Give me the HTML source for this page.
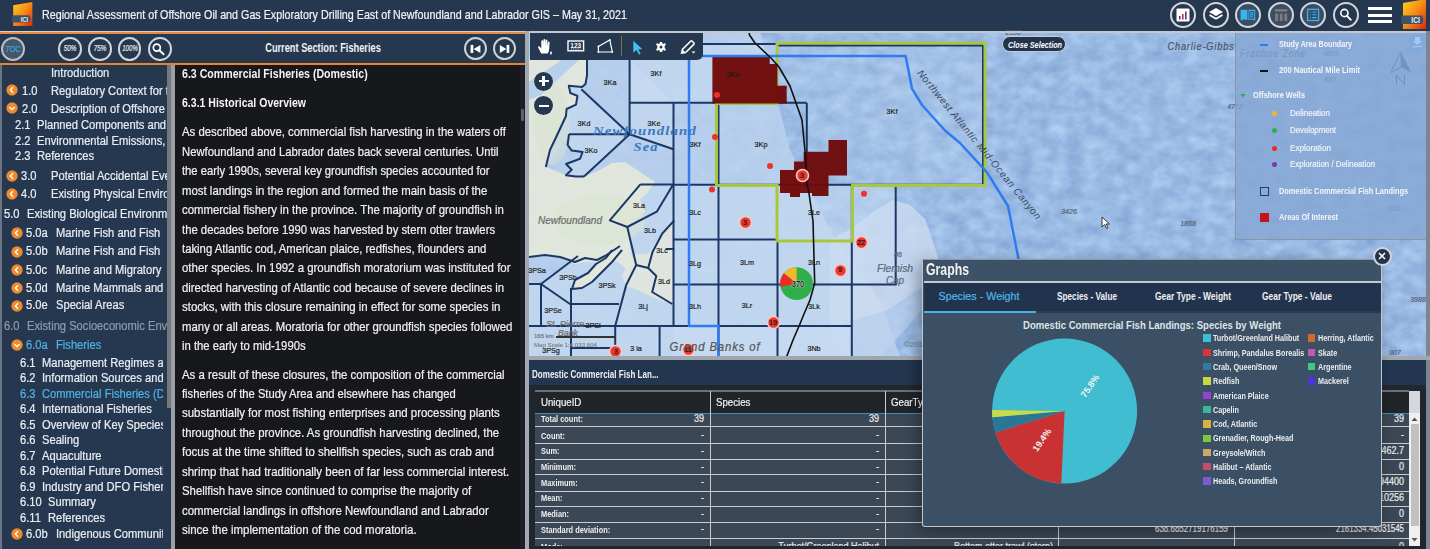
<!DOCTYPE html>
<html><head><meta charset="utf-8"><style>
html,body{margin:0;padding:0;}
body{width:1430px;height:549px;overflow:hidden;position:relative;background:#25384f;font-family:"Liberation Sans", sans-serif;}
div{box-sizing:border-box;}
.a{position:absolute;}
.t{position:absolute;}
</style></head><body>
<div class="a" style="left:0;top:0;width:1430px;height:31px;background:#25384f"></div>
<svg class="a" style="left:11px;top:1px" width="24" height="28" viewBox="0 0 24 28">
<defs><linearGradient id="lg1" x1="0" y1="0" x2="1" y2="1"><stop offset="0" stop-color="#ffd21e"/><stop offset="0.5" stop-color="#f78a14"/><stop offset="1" stop-color="#d42a10"/></linearGradient></defs>
<path d="M2.2 4.2 L21.4 1 L21.4 25 L2.2 25 Z" fill="url(#lg1)"/>
<path d="M1 14.2 L18.2 14.2 L19.8 17.8 L18.2 21.4 L1 21.4 Z" fill="#3b5268"/>
<text x="9.7" y="20.7" font-family="Liberation Sans" font-weight="bold" font-size="6.8" fill="#f0f0f0" textLength="7.3" lengthAdjust="spacingAndGlyphs">ICI</text>
</svg>
<div class="t" id="t0" style="position:absolute;top:8.00px;font-size:13px;line-height:13px;color:#f2f4f6;white-space:nowrap;-webkit-text-stroke:0.22px currentColor;left:42.00px;transform-origin:0 0;transform:translateX(0.00px) scaleX(0.8255);">Regional Assessment of Offshore Oil and Gas Exploratory Drilling East of Newfoundland and Labrador GIS – May 31, 2021</div>
<div class="a" style="left:0;top:31px;width:525px;height:1px;background:#d2d2d2"></div>
<div class="a" style="left:0;top:32px;width:525px;height:2px;background:#e38a48"></div>
<div class="a" style="left:0;top:34px;width:525px;height:29px;background:#25384f"></div>
<div class="a" style="left:0;top:63px;width:525px;height:2px;background:#e8832a"></div>
<div class="a" style="left:1.0px;top:37.0px;width:24px;height:24px;border-radius:50%;background:#46566b;border:2px solid #b9bec4"></div>
<div class="t" id="t1" style="position:absolute;top:44.88px;font-size:9px;line-height:9px;color:#3aa6e0;white-space:nowrap;-webkit-text-stroke:0.22px currentColor;font-style:italic;left:13.00px;transform-origin:0 0;transform:translateX(-7.54px) scaleX(0.8000);">TOC</div>
<div class="a" style="left:58.2px;top:37.2px;width:23.5px;height:23.5px;border-radius:50%;background:transparent;border:2px solid #d2d4d6"></div>
<div class="t" id="t2" style="position:absolute;top:44.30px;font-size:8.5px;line-height:8.5px;color:#e2e6ea;white-space:nowrap;-webkit-text-stroke:0.22px currentColor;font-style:italic;left:70.30px;transform-origin:0 0;transform:translateX(-6.35px) scaleX(0.7464);">50%</div>
<div class="a" style="left:88.2px;top:37.2px;width:23.5px;height:23.5px;border-radius:50%;background:transparent;border:2px solid #d2d4d6"></div>
<div class="t" id="t3" style="position:absolute;top:44.30px;font-size:8.5px;line-height:8.5px;color:#e2e6ea;white-space:nowrap;-webkit-text-stroke:0.22px currentColor;font-style:italic;left:100.30px;transform-origin:0 0;transform:translateX(-6.35px) scaleX(0.7464);">75%</div>
<div class="a" style="left:117.9px;top:37.2px;width:23.5px;height:23.5px;border-radius:50%;background:transparent;border:2px solid #d2d4d6"></div>
<div class="t" id="t4" style="position:absolute;top:44.30px;font-size:8.5px;line-height:8.5px;color:#e2e6ea;white-space:nowrap;-webkit-text-stroke:0.22px currentColor;font-style:italic;left:130.00px;transform-origin:0 0;transform:translateX(-7.85px) scaleX(0.7218);">100%</div>
<div class="a" style="left:148.1px;top:37.2px;width:23.5px;height:23.5px;border-radius:50%;background:transparent;border:2px solid #d2d4d6"></div>
<svg class="a" style="left:150px;top:40px" width="18" height="18" viewBox="0 0 18 18"><circle cx="6.8" cy="7.6" r="3.5" fill="none" stroke="#fff" stroke-width="1.7"/><path d="M9.4 10.2 L13.6 14.2" stroke="#fff" stroke-width="2" stroke-linecap="round"/></svg>
<div class="t" id="t5" style="position:absolute;top:41.94px;font-size:12px;line-height:12px;color:#f0f2f4;white-space:nowrap;font-weight:bold;left:322.60px;transform-origin:0 0;transform:translateX(-57.80px) scaleX(0.7704);">Current Section: Fisheries</div>
<div class="a" style="left:463.9px;top:37.0px;width:23.2px;height:23.2px;border-radius:50%;background:transparent;border:2px solid #cdd0d3"></div>
<div class="a" style="left:492.9px;top:37.0px;width:23.2px;height:23.2px;border-radius:50%;background:transparent;border:2px solid #cdd0d3"></div>
<svg class="a" style="left:465px;top:38px" width="20" height="20" viewBox="465 38 20 20"><rect x="470.6" y="44.9" width="2.7" height="8" fill="#fff"/><path d="M480.4 44.9 L480.4 52.9 L473.6 48.9 Z" fill="#fff"/></svg>
<svg class="a" style="left:495px;top:38px" width="20" height="20" viewBox="495 38 20 20"><path d="M499.8 44.9 L499.8 52.9 L506.3 48.9 Z" fill="#fff"/><rect x="506.6" y="44.9" width="2.7" height="8" fill="#fff"/></svg>
<div class="a" style="left:0;top:65px;width:167px;height:484px;background:#25384f;overflow:hidden">
<div class="a" style="left:0;top:0;width:1.5px;height:484px;background:#6a7482"></div>
</div>
<div class="a" style="left:167px;top:65px;width:4px;height:343px;background:#74787d"></div>
<div class="a" style="left:171px;top:65px;width:4px;height:484px;background:#9aa0a6"></div>
<div class="a" style="left:0;top:65px;width:167px;height:484px;overflow:hidden">
<div class="t" id="t6" style="position:absolute;top:2.34px;font-size:12px;line-height:12px;color:#e9edf2;white-space:nowrap;-webkit-text-stroke:0.22px currentColor;left:51.00px;transform-origin:0 0;transform:translateX(0.00px) scaleX(0.9300);">Introduction</div>
<div class="t" id="t7" style="position:absolute;top:19.64px;font-size:12px;line-height:12px;color:#e9edf2;white-space:nowrap;-webkit-text-stroke:0.22px currentColor;left:21.50px;transform-origin:0 0;transform:translateX(0.00px) scaleX(0.9300);">1.0</div>
<div class="t" id="t8" style="position:absolute;top:19.64px;font-size:12px;line-height:12px;color:#e9edf2;white-space:nowrap;-webkit-text-stroke:0.22px currentColor;left:51.00px;transform-origin:0 0;transform:translateX(0.00px) scaleX(0.9300);">Regulatory Context for the Regional Assessment</div>
<div class="t" id="t9" style="position:absolute;top:38.04px;font-size:12px;line-height:12px;color:#e9edf2;white-space:nowrap;-webkit-text-stroke:0.22px currentColor;left:21.50px;transform-origin:0 0;transform:translateX(0.00px) scaleX(0.9300);">2.0</div>
<div class="t" id="t10" style="position:absolute;top:38.04px;font-size:12px;line-height:12px;color:#e9edf2;white-space:nowrap;-webkit-text-stroke:0.22px currentColor;left:51.00px;transform-origin:0 0;transform:translateX(0.00px) scaleX(0.9300);">Description of Offshore Exploratory Drilling</div>
<div class="t" id="t11" style="position:absolute;top:54.24px;font-size:12px;line-height:12px;color:#e9edf2;white-space:nowrap;-webkit-text-stroke:0.22px currentColor;left:14.60px;transform-origin:0 0;transform:translateX(0.00px) scaleX(0.9300);">2.1</div>
<div class="t" id="t12" style="position:absolute;top:54.24px;font-size:12px;line-height:12px;color:#e9edf2;white-space:nowrap;-webkit-text-stroke:0.22px currentColor;left:37.30px;transform-origin:0 0;transform:translateX(0.00px) scaleX(0.9300);">Planned Components and Activities</div>
<div class="t" id="t13" style="position:absolute;top:69.74px;font-size:12px;line-height:12px;color:#e9edf2;white-space:nowrap;-webkit-text-stroke:0.22px currentColor;left:14.60px;transform-origin:0 0;transform:translateX(0.00px) scaleX(0.9300);">2.2</div>
<div class="t" id="t14" style="position:absolute;top:69.74px;font-size:12px;line-height:12px;color:#e9edf2;white-space:nowrap;-webkit-text-stroke:0.22px currentColor;left:37.30px;transform-origin:0 0;transform:translateX(0.00px) scaleX(0.9300);">Environmental Emissions, Discharges</div>
<div class="t" id="t15" style="position:absolute;top:85.24px;font-size:12px;line-height:12px;color:#e9edf2;white-space:nowrap;-webkit-text-stroke:0.22px currentColor;left:14.60px;transform-origin:0 0;transform:translateX(0.00px) scaleX(0.9300);">2.3</div>
<div class="t" id="t16" style="position:absolute;top:85.24px;font-size:12px;line-height:12px;color:#e9edf2;white-space:nowrap;-webkit-text-stroke:0.22px currentColor;left:37.30px;transform-origin:0 0;transform:translateX(0.00px) scaleX(0.9300);">References</div>
<div class="t" id="t17" style="position:absolute;top:104.84px;font-size:12px;line-height:12px;color:#e9edf2;white-space:nowrap;-webkit-text-stroke:0.22px currentColor;left:21.00px;transform-origin:0 0;transform:translateX(0.00px) scaleX(0.9300);">3.0</div>
<div class="t" id="t18" style="position:absolute;top:104.84px;font-size:12px;line-height:12px;color:#e9edf2;white-space:nowrap;-webkit-text-stroke:0.22px currentColor;left:51.00px;transform-origin:0 0;transform:translateX(0.00px) scaleX(0.9300);">Potential Accidental Events</div>
<div class="t" id="t19" style="position:absolute;top:123.44px;font-size:12px;line-height:12px;color:#e9edf2;white-space:nowrap;-webkit-text-stroke:0.22px currentColor;left:21.00px;transform-origin:0 0;transform:translateX(0.00px) scaleX(0.9300);">4.0</div>
<div class="t" id="t20" style="position:absolute;top:123.44px;font-size:12px;line-height:12px;color:#e9edf2;white-space:nowrap;-webkit-text-stroke:0.22px currentColor;left:51.00px;transform-origin:0 0;transform:translateX(0.00px) scaleX(0.9300);">Existing Physical Environment</div>
<div class="t" id="t21" style="position:absolute;top:143.14px;font-size:12px;line-height:12px;color:#e9edf2;white-space:nowrap;-webkit-text-stroke:0.22px currentColor;left:4.00px;transform-origin:0 0;transform:translateX(0.00px) scaleX(0.9300);">5.0</div>
<div class="t" id="t22" style="position:absolute;top:143.14px;font-size:12px;line-height:12px;color:#e9edf2;white-space:nowrap;-webkit-text-stroke:0.22px currentColor;left:27.00px;transform-origin:0 0;transform:translateX(0.00px) scaleX(0.9300);">Existing Biological Environment</div>
<div class="t" id="t23" style="position:absolute;top:254.54px;font-size:12px;line-height:12px;color:#8e9bad;white-space:nowrap;-webkit-text-stroke:0.22px currentColor;left:4.00px;transform-origin:0 0;transform:translateX(0.00px) scaleX(0.9300);">6.0</div>
<div class="t" id="t24" style="position:absolute;top:254.54px;font-size:12px;line-height:12px;color:#8e9bad;white-space:nowrap;-webkit-text-stroke:0.22px currentColor;left:27.00px;transform-origin:0 0;transform:translateX(0.00px) scaleX(0.9300);">Existing Socioeconomic Environment</div>
</div>
<div class="a" style="left:0;top:65px;width:162.5px;height:484px;overflow:hidden">
<div class="t" id="t25" style="position:absolute;top:162.24px;font-size:12px;line-height:12px;color:#e9edf2;white-space:nowrap;-webkit-text-stroke:0.22px currentColor;left:26.40px;transform-origin:0 0;transform:translateX(0.00px) scaleX(0.9300);">5.0a</div>
<div class="t" id="t26" style="position:absolute;top:162.24px;font-size:12px;line-height:12px;color:#e9edf2;white-space:nowrap;-webkit-text-stroke:0.22px currentColor;left:56.00px;transform-origin:0 0;transform:translateX(0.00px) scaleX(0.9300);">Marine Fish and Fish Habitat</div>
<div class="t" id="t27" style="position:absolute;top:180.44px;font-size:12px;line-height:12px;color:#e9edf2;white-space:nowrap;-webkit-text-stroke:0.22px currentColor;left:26.40px;transform-origin:0 0;transform:translateX(0.00px) scaleX(0.9300);">5.0b</div>
<div class="t" id="t28" style="position:absolute;top:180.44px;font-size:12px;line-height:12px;color:#e9edf2;white-space:nowrap;-webkit-text-stroke:0.22px currentColor;left:56.00px;transform-origin:0 0;transform:translateX(0.00px) scaleX(0.9300);">Marine Fish and Fish Habitat</div>
<div class="t" id="t29" style="position:absolute;top:198.84px;font-size:12px;line-height:12px;color:#e9edf2;white-space:nowrap;-webkit-text-stroke:0.22px currentColor;left:26.40px;transform-origin:0 0;transform:translateX(0.00px) scaleX(0.9300);">5.0c</div>
<div class="t" id="t30" style="position:absolute;top:198.84px;font-size:12px;line-height:12px;color:#e9edf2;white-space:nowrap;-webkit-text-stroke:0.22px currentColor;left:56.00px;transform-origin:0 0;transform:translateX(0.00px) scaleX(0.9300);">Marine and Migratory Birds</div>
<div class="t" id="t31" style="position:absolute;top:217.14px;font-size:12px;line-height:12px;color:#e9edf2;white-space:nowrap;-webkit-text-stroke:0.22px currentColor;left:26.40px;transform-origin:0 0;transform:translateX(0.00px) scaleX(0.9300);">5.0d</div>
<div class="t" id="t32" style="position:absolute;top:217.14px;font-size:12px;line-height:12px;color:#e9edf2;white-space:nowrap;-webkit-text-stroke:0.22px currentColor;left:56.00px;transform-origin:0 0;transform:translateX(0.00px) scaleX(0.9300);">Marine Mammals and Sea Turtles</div>
<div class="t" id="t33" style="position:absolute;top:234.44px;font-size:12px;line-height:12px;color:#e9edf2;white-space:nowrap;-webkit-text-stroke:0.22px currentColor;left:26.40px;transform-origin:0 0;transform:translateX(0.00px) scaleX(0.9300);">5.0e</div>
<div class="t" id="t34" style="position:absolute;top:234.44px;font-size:12px;line-height:12px;color:#e9edf2;white-space:nowrap;-webkit-text-stroke:0.22px currentColor;left:56.00px;transform-origin:0 0;transform:translateX(0.00px) scaleX(0.9300);">Special Areas</div>
<div class="t" id="t35" style="position:absolute;top:273.64px;font-size:12px;line-height:12px;color:#4cb2e4;white-space:nowrap;-webkit-text-stroke:0.22px currentColor;left:26.40px;transform-origin:0 0;transform:translateX(0.00px) scaleX(0.9300);">6.0a</div>
<div class="t" id="t36" style="position:absolute;top:273.64px;font-size:12px;line-height:12px;color:#4cb2e4;white-space:nowrap;-webkit-text-stroke:0.22px currentColor;left:56.00px;transform-origin:0 0;transform:translateX(0.00px) scaleX(0.9300);">Fisheries</div>
<div class="t" id="t37" style="position:absolute;top:291.64px;font-size:12px;line-height:12px;color:#e9edf2;white-space:nowrap;-webkit-text-stroke:0.22px currentColor;left:19.70px;transform-origin:0 0;transform:translateX(0.00px) scaleX(0.9300);">6.1</div>
<div class="t" id="t38" style="position:absolute;top:291.64px;font-size:12px;line-height:12px;color:#e9edf2;white-space:nowrap;-webkit-text-stroke:0.22px currentColor;left:42.30px;transform-origin:0 0;transform:translateX(0.00px) scaleX(0.9300);">Management Regimes and Fisheries</div>
<div class="t" id="t39" style="position:absolute;top:307.14px;font-size:12px;line-height:12px;color:#e9edf2;white-space:nowrap;-webkit-text-stroke:0.22px currentColor;left:19.70px;transform-origin:0 0;transform:translateX(0.00px) scaleX(0.9300);">6.2</div>
<div class="t" id="t40" style="position:absolute;top:307.14px;font-size:12px;line-height:12px;color:#e9edf2;white-space:nowrap;-webkit-text-stroke:0.22px currentColor;left:42.30px;transform-origin:0 0;transform:translateX(0.00px) scaleX(0.9300);">Information Sources and Data</div>
<div class="t" id="t41" style="position:absolute;top:322.64px;font-size:12px;line-height:12px;color:#4cb2e4;white-space:nowrap;-webkit-text-stroke:0.22px currentColor;left:19.70px;transform-origin:0 0;transform:translateX(0.00px) scaleX(0.9300);">6.3</div>
<div class="t" id="t42" style="position:absolute;top:322.64px;font-size:12px;line-height:12px;color:#4cb2e4;white-space:nowrap;-webkit-text-stroke:0.22px currentColor;left:42.30px;transform-origin:0 0;transform:translateX(0.00px) scaleX(0.9300);">Commercial Fisheries (Domestic)</div>
<div class="t" id="t43" style="position:absolute;top:338.14px;font-size:12px;line-height:12px;color:#e9edf2;white-space:nowrap;-webkit-text-stroke:0.22px currentColor;left:19.70px;transform-origin:0 0;transform:translateX(0.00px) scaleX(0.9300);">6.4</div>
<div class="t" id="t44" style="position:absolute;top:338.14px;font-size:12px;line-height:12px;color:#e9edf2;white-space:nowrap;-webkit-text-stroke:0.22px currentColor;left:42.30px;transform-origin:0 0;transform:translateX(0.00px) scaleX(0.9300);">International Fisheries</div>
<div class="t" id="t45" style="position:absolute;top:353.64px;font-size:12px;line-height:12px;color:#e9edf2;white-space:nowrap;-webkit-text-stroke:0.22px currentColor;left:19.70px;transform-origin:0 0;transform:translateX(0.00px) scaleX(0.9300);">6.5</div>
<div class="t" id="t46" style="position:absolute;top:353.64px;font-size:12px;line-height:12px;color:#e9edf2;white-space:nowrap;-webkit-text-stroke:0.22px currentColor;left:42.30px;transform-origin:0 0;transform:translateX(0.00px) scaleX(0.9300);">Overview of Key Species</div>
<div class="t" id="t47" style="position:absolute;top:369.14px;font-size:12px;line-height:12px;color:#e9edf2;white-space:nowrap;-webkit-text-stroke:0.22px currentColor;left:19.70px;transform-origin:0 0;transform:translateX(0.00px) scaleX(0.9300);">6.6</div>
<div class="t" id="t48" style="position:absolute;top:369.14px;font-size:12px;line-height:12px;color:#e9edf2;white-space:nowrap;-webkit-text-stroke:0.22px currentColor;left:42.30px;transform-origin:0 0;transform:translateX(0.00px) scaleX(0.9300);">Sealing</div>
<div class="t" id="t49" style="position:absolute;top:384.64px;font-size:12px;line-height:12px;color:#e9edf2;white-space:nowrap;-webkit-text-stroke:0.22px currentColor;left:19.70px;transform-origin:0 0;transform:translateX(0.00px) scaleX(0.9300);">6.7</div>
<div class="t" id="t50" style="position:absolute;top:384.64px;font-size:12px;line-height:12px;color:#e9edf2;white-space:nowrap;-webkit-text-stroke:0.22px currentColor;left:42.30px;transform-origin:0 0;transform:translateX(0.00px) scaleX(0.9300);">Aquaculture</div>
<div class="t" id="t51" style="position:absolute;top:400.14px;font-size:12px;line-height:12px;color:#e9edf2;white-space:nowrap;-webkit-text-stroke:0.22px currentColor;left:19.70px;transform-origin:0 0;transform:translateX(0.00px) scaleX(0.9300);">6.8</div>
<div class="t" id="t52" style="position:absolute;top:400.14px;font-size:12px;line-height:12px;color:#e9edf2;white-space:nowrap;-webkit-text-stroke:0.22px currentColor;left:42.30px;transform-origin:0 0;transform:translateX(0.00px) scaleX(0.9300);">Potential Future Domestic Fisheries</div>
<div class="t" id="t53" style="position:absolute;top:415.64px;font-size:12px;line-height:12px;color:#e9edf2;white-space:nowrap;-webkit-text-stroke:0.22px currentColor;left:19.70px;transform-origin:0 0;transform:translateX(0.00px) scaleX(0.9300);">6.9</div>
<div class="t" id="t54" style="position:absolute;top:415.64px;font-size:12px;line-height:12px;color:#e9edf2;white-space:nowrap;-webkit-text-stroke:0.22px currentColor;left:42.30px;transform-origin:0 0;transform:translateX(0.00px) scaleX(0.9300);">Industry and DFO Fisheries Surveys</div>
<div class="t" id="t55" style="position:absolute;top:431.14px;font-size:12px;line-height:12px;color:#e9edf2;white-space:nowrap;-webkit-text-stroke:0.22px currentColor;left:19.70px;transform-origin:0 0;transform:translateX(0.00px) scaleX(0.9300);">6.10</div>
<div class="t" id="t56" style="position:absolute;top:431.14px;font-size:12px;line-height:12px;color:#e9edf2;white-space:nowrap;-webkit-text-stroke:0.22px currentColor;left:48.30px;transform-origin:0 0;transform:translateX(0.00px) scaleX(0.9300);">Summary</div>
<div class="t" id="t57" style="position:absolute;top:446.64px;font-size:12px;line-height:12px;color:#e9edf2;white-space:nowrap;-webkit-text-stroke:0.22px currentColor;left:19.70px;transform-origin:0 0;transform:translateX(0.00px) scaleX(0.9300);">6.11</div>
<div class="t" id="t58" style="position:absolute;top:446.64px;font-size:12px;line-height:12px;color:#e9edf2;white-space:nowrap;-webkit-text-stroke:0.22px currentColor;left:48.30px;transform-origin:0 0;transform:translateX(0.00px) scaleX(0.9300);">References</div>
<div class="t" id="t59" style="position:absolute;top:463.14px;font-size:12px;line-height:12px;color:#e9edf2;white-space:nowrap;-webkit-text-stroke:0.22px currentColor;left:26.40px;transform-origin:0 0;transform:translateX(0.00px) scaleX(0.9300);">6.0b</div>
<div class="t" id="t60" style="position:absolute;top:463.14px;font-size:12px;line-height:12px;color:#e9edf2;white-space:nowrap;-webkit-text-stroke:0.22px currentColor;left:56.00px;transform-origin:0 0;transform:translateX(0.00px) scaleX(0.9300);">Indigenous Communities and Land Use</div>
</div>
<svg class="a" style="left:6.0px;top:84.0px" width="12" height="12" viewBox="0 0 12 12"><circle cx="6" cy="6" r="5.7" fill="#ee8a2e"/><path d="M7 3.3 L4.4 6 L7 8.7" fill="none" stroke="#fff" stroke-width="1.4"/></svg>
<svg class="a" style="left:6.0px;top:102.0px" width="12" height="12" viewBox="0 0 12 12"><circle cx="6" cy="6" r="5.7" fill="#ee8a2e"/><path d="M3.3 5 L6 7.6 L8.7 5" fill="none" stroke="#fff" stroke-width="1.4"/></svg>
<svg class="a" style="left:6.0px;top:170.0px" width="12" height="12" viewBox="0 0 12 12"><circle cx="6" cy="6" r="5.7" fill="#ee8a2e"/><path d="M7 3.3 L4.4 6 L7 8.7" fill="none" stroke="#fff" stroke-width="1.4"/></svg>
<svg class="a" style="left:6.0px;top:188.0px" width="12" height="12" viewBox="0 0 12 12"><circle cx="6" cy="6" r="5.7" fill="#ee8a2e"/><path d="M7 3.3 L4.4 6 L7 8.7" fill="none" stroke="#fff" stroke-width="1.4"/></svg>
<svg class="a" style="left:11.0px;top:227.0px" width="12" height="12" viewBox="0 0 12 12"><circle cx="6" cy="6" r="5.7" fill="#ee8a2e"/><path d="M7 3.3 L4.4 6 L7 8.7" fill="none" stroke="#fff" stroke-width="1.4"/></svg>
<svg class="a" style="left:11.0px;top:245.5px" width="12" height="12" viewBox="0 0 12 12"><circle cx="6" cy="6" r="5.7" fill="#ee8a2e"/><path d="M7 3.3 L4.4 6 L7 8.7" fill="none" stroke="#fff" stroke-width="1.4"/></svg>
<svg class="a" style="left:11.0px;top:264.0px" width="12" height="12" viewBox="0 0 12 12"><circle cx="6" cy="6" r="5.7" fill="#ee8a2e"/><path d="M7 3.3 L4.4 6 L7 8.7" fill="none" stroke="#fff" stroke-width="1.4"/></svg>
<svg class="a" style="left:11.0px;top:282.3px" width="12" height="12" viewBox="0 0 12 12"><circle cx="6" cy="6" r="5.7" fill="#ee8a2e"/><path d="M7 3.3 L4.4 6 L7 8.7" fill="none" stroke="#fff" stroke-width="1.4"/></svg>
<svg class="a" style="left:11.0px;top:299.5px" width="12" height="12" viewBox="0 0 12 12"><circle cx="6" cy="6" r="5.7" fill="#ee8a2e"/><path d="M7 3.3 L4.4 6 L7 8.7" fill="none" stroke="#fff" stroke-width="1.4"/></svg>
<svg class="a" style="left:11.0px;top:528.0px" width="12" height="12" viewBox="0 0 12 12"><circle cx="6" cy="6" r="5.7" fill="#ee8a2e"/><path d="M7 3.3 L4.4 6 L7 8.7" fill="none" stroke="#fff" stroke-width="1.4"/></svg>
<svg class="a" style="left:11.0px;top:339.0px" width="12" height="12" viewBox="0 0 12 12"><circle cx="6" cy="6" r="5.7" fill="#ee8a2e"/><path d="M3.3 5 L6 7.6 L8.7 5" fill="none" stroke="#fff" stroke-width="1.4"/></svg>
<div class="a" style="left:175px;top:65px;width:348px;height:484px;background:#17181c"></div>
<div class="a" style="left:520px;top:65px;width:5px;height:484px;background:#1e1e24"></div>
<div class="a" style="left:520.5px;top:109px;width:3.5px;height:12px;background:#5c6068;border-radius:1px"></div>
<div class="t" id="t61" style="position:absolute;top:67.00px;font-size:13px;line-height:13px;color:#f4f4f4;white-space:nowrap;font-weight:bold;left:181.50px;transform-origin:0 0;transform:translateX(0.00px) scaleX(0.8159);">6.3 Commercial Fisheries (Domestic)</div>
<div class="t" id="t62" style="position:absolute;top:95.80px;font-size:13px;line-height:13px;color:#f4f4f4;white-space:nowrap;font-weight:bold;left:181.50px;transform-origin:0 0;transform:translateX(0.00px) scaleX(0.8094);">6.3.1 Historical Overview</div>
<div class="t" id="t63" style="position:absolute;top:125.20px;font-size:13px;line-height:13px;color:#f0f0f0;white-space:nowrap;-webkit-text-stroke:0.22px currentColor;left:181.70px;transform-origin:0 0;transform:translateX(0.00px) scaleX(0.8741);">As described above, commercial fish harvesting in the waters off</div>
<div class="t" id="t64" style="position:absolute;top:144.66px;font-size:13px;line-height:13px;color:#f0f0f0;white-space:nowrap;-webkit-text-stroke:0.22px currentColor;left:181.70px;transform-origin:0 0;transform:translateX(0.00px) scaleX(0.8658);">Newfoundland and Labrador dates back several centuries. Until</div>
<div class="t" id="t65" style="position:absolute;top:164.12px;font-size:13px;line-height:13px;color:#f0f0f0;white-space:nowrap;-webkit-text-stroke:0.22px currentColor;left:181.70px;transform-origin:0 0;transform:translateX(0.00px) scaleX(0.8634);">the early 1990s, several key groundfish species accounted for</div>
<div class="t" id="t66" style="position:absolute;top:183.58px;font-size:13px;line-height:13px;color:#f0f0f0;white-space:nowrap;-webkit-text-stroke:0.22px currentColor;left:181.70px;transform-origin:0 0;transform:translateX(0.00px) scaleX(0.8765);">most landings in the region and formed the main basis of the</div>
<div class="t" id="t67" style="position:absolute;top:203.04px;font-size:13px;line-height:13px;color:#f0f0f0;white-space:nowrap;-webkit-text-stroke:0.22px currentColor;left:181.70px;transform-origin:0 0;transform:translateX(0.00px) scaleX(0.8758);">commercial fishery in the province. The majority of groundfish in</div>
<div class="t" id="t68" style="position:absolute;top:222.50px;font-size:13px;line-height:13px;color:#f0f0f0;white-space:nowrap;-webkit-text-stroke:0.22px currentColor;left:181.70px;transform-origin:0 0;transform:translateX(0.00px) scaleX(0.8700);">the decades before 1990 was harvested by stern otter trawlers</div>
<div class="t" id="t69" style="position:absolute;top:241.96px;font-size:13px;line-height:13px;color:#f0f0f0;white-space:nowrap;-webkit-text-stroke:0.22px currentColor;left:181.70px;transform-origin:0 0;transform:translateX(0.00px) scaleX(0.8700);">taking Atlantic cod, American plaice, redfishes, flounders and</div>
<div class="t" id="t70" style="position:absolute;top:261.42px;font-size:13px;line-height:13px;color:#f0f0f0;white-space:nowrap;-webkit-text-stroke:0.22px currentColor;left:181.70px;transform-origin:0 0;transform:translateX(0.00px) scaleX(0.8793);">other species. In 1992 a groundfish moratorium was instituted for</div>
<div class="t" id="t71" style="position:absolute;top:280.88px;font-size:13px;line-height:13px;color:#f0f0f0;white-space:nowrap;-webkit-text-stroke:0.22px currentColor;left:181.70px;transform-origin:0 0;transform:translateX(0.00px) scaleX(0.8722);">directed harvesting of Atlantic cod because of severe declines in</div>
<div class="t" id="t72" style="position:absolute;top:300.34px;font-size:13px;line-height:13px;color:#f0f0f0;white-space:nowrap;-webkit-text-stroke:0.22px currentColor;left:181.70px;transform-origin:0 0;transform:translateX(0.00px) scaleX(0.8804);">stocks, with this closure remaining in effect for some species in</div>
<div class="t" id="t73" style="position:absolute;top:319.80px;font-size:13px;line-height:13px;color:#f0f0f0;white-space:nowrap;-webkit-text-stroke:0.22px currentColor;left:181.70px;transform-origin:0 0;transform:translateX(0.00px) scaleX(0.8760);">many or all areas. Moratoria for other groundfish species followed</div>
<div class="t" id="t74" style="position:absolute;top:339.26px;font-size:13px;line-height:13px;color:#f0f0f0;white-space:nowrap;-webkit-text-stroke:0.22px currentColor;left:181.70px;transform-origin:0 0;transform:translateX(0.00px) scaleX(0.8682);">in the early to mid-1990s</div>
<div class="t" id="t75" style="position:absolute;top:367.50px;font-size:13px;line-height:13px;color:#f0f0f0;white-space:nowrap;-webkit-text-stroke:0.22px currentColor;left:181.70px;transform-origin:0 0;transform:translateX(0.00px) scaleX(0.8772);">As a result of these closures, the composition of the commercial</div>
<div class="t" id="t76" style="position:absolute;top:386.96px;font-size:13px;line-height:13px;color:#f0f0f0;white-space:nowrap;-webkit-text-stroke:0.22px currentColor;left:181.70px;transform-origin:0 0;transform:translateX(0.00px) scaleX(0.8610);">fisheries of the Study Area and elsewhere has changed</div>
<div class="t" id="t77" style="position:absolute;top:406.42px;font-size:13px;line-height:13px;color:#f0f0f0;white-space:nowrap;-webkit-text-stroke:0.22px currentColor;left:181.70px;transform-origin:0 0;transform:translateX(0.00px) scaleX(0.8796);">substantially for most fishing enterprises and processing plants</div>
<div class="t" id="t78" style="position:absolute;top:425.88px;font-size:13px;line-height:13px;color:#f0f0f0;white-space:nowrap;-webkit-text-stroke:0.22px currentColor;left:181.70px;transform-origin:0 0;transform:translateX(0.00px) scaleX(0.8723);">throughout the province. As groundfish harvesting declined, the</div>
<div class="t" id="t79" style="position:absolute;top:445.34px;font-size:13px;line-height:13px;color:#f0f0f0;white-space:nowrap;-webkit-text-stroke:0.22px currentColor;left:181.70px;transform-origin:0 0;transform:translateX(0.00px) scaleX(0.8755);">focus at the time shifted to shellfish species, such as crab and</div>
<div class="t" id="t80" style="position:absolute;top:464.80px;font-size:13px;line-height:13px;color:#f0f0f0;white-space:nowrap;-webkit-text-stroke:0.22px currentColor;left:181.70px;transform-origin:0 0;transform:translateX(0.00px) scaleX(0.8813);">shrimp that had traditionally been of far less commercial interest.</div>
<div class="t" id="t81" style="position:absolute;top:484.26px;font-size:13px;line-height:13px;color:#f0f0f0;white-space:nowrap;-webkit-text-stroke:0.22px currentColor;left:181.70px;transform-origin:0 0;transform:translateX(0.00px) scaleX(0.8741);">Shellfish have since continued to comprise the majority of</div>
<div class="t" id="t82" style="position:absolute;top:503.72px;font-size:13px;line-height:13px;color:#f0f0f0;white-space:nowrap;-webkit-text-stroke:0.22px currentColor;left:181.70px;transform-origin:0 0;transform:translateX(0.00px) scaleX(0.8756);">commercial landings in offshore Newfoundland and Labrador</div>
<div class="t" id="t83" style="position:absolute;top:523.18px;font-size:13px;line-height:13px;color:#f0f0f0;white-space:nowrap;-webkit-text-stroke:0.22px currentColor;left:181.70px;transform-origin:0 0;transform:translateX(0.00px) scaleX(0.8798);">since the implementation of the cod moratoria.</div>
<div class="a" style="left:525px;top:31px;width:4px;height:518px;background:#a3a9b0"></div>
<svg class="a" style="left:529px;top:31px" width="901" height="325" viewBox="529 31 901 325">
<defs>
<filter id="bath" x="0" y="0" width="100%" height="100%" color-interpolation-filters="sRGB"><feTurbulence type="fractalNoise" baseFrequency="0.06 0.08" numOctaves="3" seed="11" result="n"/><feColorMatrix in="n" type="matrix" values="0.2 0 0 0 0.505  0.2 0 0 0 0.63  0.14 0 0 0 0.825  0 0 0 0 1"/></filter>
<linearGradient id="shelf" x1="0" y1="0" x2="1" y2="0"><stop offset="0" stop-color="#c6d9ef"/><stop offset="1" stop-color="#a9c5e9"/></linearGradient>
</defs>
<rect x="529" y="31" width="901" height="325" fill="#a3c0e7"/>
<rect x="529" y="31" width="901" height="325" filter="url(#bath)" opacity="1"/>
<path d="M529 31 L760 31 L790 150 L830 230 L880 300 L900 356 L529 356 Z" fill="#bdd3ee" opacity="0.8"/>
<polygon points="852,228 876,210 892.6,199.7 910,205 925.4,219.3 938.5,258.7 922,288 886,311 850,321 830,330 830,240" fill="#d0def0" opacity="0.75"/>
<polygon points="830,330 850,321 886,311 922,288 930,300 905,330 880,356 830,356" fill="#c0d4ee" opacity="0.6"/>
<polygon points="587.6,59 703,59 703,44 777,44 777,102.8 629.6,102.8 629.6,59" fill="#c8dcf2" opacity="0.55"/>
<polygon points="545.8,167 550,150 555.7,138 565.9,116.3 566.6,109 576,104.6 577.5,95.9 570.3,93 568.8,85.7 582,87 585.5,84 587,75.5 587,59 581.3,89.2 629.6,134.2 569,134.2" fill="#c8dcf2" opacity="0.55"/>
<polygon points="629.6,59 629.6,134.2 673.5,149.3 673.5,102.8" fill="#c8dcf2" opacity="0.55"/>
<polygon points="569,134.2 629.6,134.2 584,176.6 575.8,176.6 566,175.2 571.7,169.8 566,164 580,158.8 582.6,152 571.7,150.6 567.6,145" fill="#c8dcf2" opacity="0.55"/>
<polygon points="673.5,102.8 806.8,102.8 806.8,184.8 985,184.8 985,43 777,43 777,102.8" fill="#c8dcf2" opacity="0.2"/>
<polygon points="673.5,102.8 673.5,326 852,326 852,356 529,356 529,284 541,284 578,256 611.6,221 636.4,190 673.5,184" fill="#c8dcf2" opacity="0.55"/>
<polygon points="673.5,184.8 895.7,184.8 895.7,284.4 852,284.4 852,356 673.5,356" fill="#c8dcf2" opacity="0.55"/>
<polygon points="529,59 587,59 587,75.5 585.5,84 582,87 568.8,85.7 570.3,93 577.5,95.9 576,104.6 566.6,109 565.9,116.3 555.7,138 550,150 545.8,167 566,175 584,176.6 600,170 612,163 625,162 640,172 655,182 648,192 640,200 645,212 632,222 627,227 630,245 633,262 628,270 618,262 608,258 600,262 585,262 575,264 560,258 545,256 529,258" fill="#e4e8db" opacity="0.92"/>
<polygon points="572,289 575,280 588,273 596,264 606,258 612,250 622,250 612,262 602,272 592,282 582,288" fill="#e4e8db" opacity="0.92"/>
<polygon points="628,262 636,254 648,254 662,233 674,221 674,304 660,300 650,296 640,291 626,286 622,276" fill="#e4e8db" opacity="0.85"/>
<ellipse cx="552" cy="125" rx="18" ry="40" fill="#d8e2d0" opacity="0.5"/>
<polygon points="529,82 563,59 580,59 541,95 529,100" fill="#b9d0ec"/>
<ellipse cx="600" cy="220" rx="45" ry="25" fill="#dbe4d2" opacity="0.6"/>
<polyline points="587,59 587,75.5 585.5,84 582,87 568.8,85.7 570.3,93 577.5,95.9 576,104.6 566.6,109 565.9,116.3 555.7,138 550,150 545.8,167" fill="none" stroke="#1a3766" stroke-width="2" stroke-linejoin="round"/>
<polyline points="569,134.2 567.6,145 571.7,150.6 582.6,152 580,158.8 566,164 571.7,169.8 566,175.2 575.8,176.6 584,176.6" fill="none" stroke="#1a3766" stroke-width="2" stroke-linejoin="round"/>
<polyline points="629.6,59 629.6,134.2" fill="none" stroke="#1a3766" stroke-width="2" stroke-linejoin="round"/>
<polyline points="629.6,102.8 806.8,102.8" fill="none" stroke="#1a3766" stroke-width="2" stroke-linejoin="round"/>
<polyline points="581.3,89.2 629.6,134.2" fill="none" stroke="#1a3766" stroke-width="2" stroke-linejoin="round"/>
<polyline points="569,134.2 629.6,134.2" fill="none" stroke="#1a3766" stroke-width="2" stroke-linejoin="round"/>
<polyline points="629.6,134.2 673.5,149.3" fill="none" stroke="#1a3766" stroke-width="2" stroke-linejoin="round"/>
<polyline points="673.5,102.8 673.5,326" fill="none" stroke="#1a3766" stroke-width="2" stroke-linejoin="round"/>
<polyline points="629.6,134.2 584,176.6" fill="none" stroke="#1a3766" stroke-width="2" stroke-linejoin="round"/>
<polyline points="703,44 777,44" fill="none" stroke="#1a3766" stroke-width="2" stroke-linejoin="round"/>
<polyline points="778,45.5 983,45.5 983,184" fill="none" stroke="#1a3766" stroke-width="2" stroke-linejoin="round"/>
<polyline points="718.5,103 718.5,356" fill="none" stroke="#1a3766" stroke-width="2" stroke-linejoin="round"/>
<polyline points="777.5,241 777.5,356" fill="none" stroke="#1a3766" stroke-width="2" stroke-linejoin="round"/>
<polyline points="806.8,103 806.8,185" fill="none" stroke="#1a3766" stroke-width="2" stroke-linejoin="round"/>
<polyline points="673.5,184.8 985,184.8" fill="none" stroke="#1a3766" stroke-width="2" stroke-linejoin="round"/>
<polyline points="895.7,185 895.7,284.4" fill="none" stroke="#1a3766" stroke-width="2" stroke-linejoin="round"/>
<polyline points="851.8,185 851.8,356" fill="none" stroke="#1a3766" stroke-width="2" stroke-linejoin="round"/>
<polyline points="673.5,239.5 777,239.5" fill="none" stroke="#1a3766" stroke-width="2" stroke-linejoin="round"/>
<polyline points="673.5,284.4 896.7,284.4" fill="none" stroke="#1a3766" stroke-width="2" stroke-linejoin="round"/>
<polyline points="529,326 852,326" fill="none" stroke="#1a3766" stroke-width="2" stroke-linejoin="round"/>
<polyline points="659.6,326 659.6,356" fill="none" stroke="#1a3766" stroke-width="2" stroke-linejoin="round"/>
<polyline points="570,348 616,348" fill="none" stroke="#1a3766" stroke-width="2" stroke-linejoin="round"/>
<polyline points="571,288 571,356" fill="none" stroke="#1a3766" stroke-width="2" stroke-linejoin="round"/>
<polyline points="615.2,326.2 615.2,356" fill="none" stroke="#1a3766" stroke-width="2" stroke-linejoin="round"/>
<polyline points="541,284 570,304 619,304" fill="none" stroke="#1a3766" stroke-width="2" stroke-linejoin="round"/>
<polyline points="541,284 541,326" fill="none" stroke="#1a3766" stroke-width="2" stroke-linejoin="round"/>
<polyline points="529,284 541,284" fill="none" stroke="#1a3766" stroke-width="2" stroke-linejoin="round"/>
<polyline points="541,284 578,256" fill="none" stroke="#1a3766" stroke-width="2" stroke-linejoin="round"/>
<polyline points="640.4,184.4 673.2,184.4 656.8,211.7 627.3,227 609.8,220.4 640.4,184.4" fill="none" stroke="#1a3766" stroke-width="2" stroke-linejoin="round"/>
<polyline points="627.3,227 636.2,265" fill="none" stroke="#1a3766" stroke-width="2" stroke-linejoin="round"/>
<polyline points="674.3,220.4 662.3,233.5 652.5,252 648.2,268" fill="none" stroke="#1a3766" stroke-width="2" stroke-linejoin="round"/>
<polyline points="665.6,249 674.3,249" fill="none" stroke="#1a3766" stroke-width="2" stroke-linejoin="round"/>
<polyline points="636.2,265 626.2,285 615.2,326" fill="none" stroke="#1a3766" stroke-width="2" stroke-linejoin="round"/>
<polyline points="636.2,265 648.2,268 656.3,276 652.2,292 672.3,304" fill="none" stroke="#1a3766" stroke-width="2" stroke-linejoin="round"/>
<polyline points="529,257 545,255 560,257 575,262 585,258 597,260 605,256 614,250 620,246" fill="none" stroke="#1a3766" stroke-width="2" stroke-linejoin="round"/>
<polyline points="572,289 575,280 588,273 596,264 606,258 612,250" fill="none" stroke="#1a3766" stroke-width="2" stroke-linejoin="round"/>
<polyline points="622,250 612,262 602,272 592,282 582,288 572,289" fill="none" stroke="#1a3766" stroke-width="2" stroke-linejoin="round"/>
<polyline points="777,43 985,43 985,185.5 852.5,185.5 852.5,241 777,241 777,185.5 716.5,185.5 716.5,103.5 777,103.5 777,43" fill="none" stroke="#a9c73c" stroke-width="3"/>
<polygon points="712.4,56.3 769.7,56.3 769.7,64 777.4,64 777.4,85.7 786.7,85.7 786.7,103.4 712.4,103.4" fill="#6e0a0a" opacity="0.97"/>
<polygon points="803.7,151.7 828.5,151.7 828.5,140 847,140 847,175.5 828.5,175.5 828.5,196 812,196 812,193 800,193 800,197 790,197 790,193 780,193 780,170 794,170 794,161.6 803.7,161.6" fill="#6e0a0a" opacity="0.97"/>
<polyline points="718.4,356 718.4,326 689,326 689,56 905.6,56 912,88.6 922,105 945,130.5 960,143 987,172.4 1008,206 1018.7,260 1025,300" fill="none" stroke="#2f7cf0" stroke-width="2.5" stroke-linejoin="round"/>
<polyline points="749,31 749.5,35 755,43 771,58 779,67 790,86 802,120 805,151 807,185 808.5,190 813,221 814.7,283 810,300 804,314 799.5,325 793,340 786.5,357" fill="none" stroke="#111" stroke-width="1.6" stroke-linejoin="round"/>
<circle cx="717" cy="95" r="3" fill="#f0302a"/>
<circle cx="715" cy="137" r="3" fill="#f0302a"/>
<circle cx="770" cy="166" r="3" fill="#f0302a"/>
<circle cx="712" cy="189.4" r="3" fill="#f0302a"/>
<circle cx="864" cy="193.7" r="3" fill="#f0302a"/>
</svg>
<svg class="a" style="left:794.5px;top:168.0px" width="15" height="15"><circle cx="7.5" cy="7.5" r="6" fill="#e83a32" stroke="#f6c9c5" stroke-width="1.6"/></svg>
<div class="t" id="t84" style="position:absolute;top:171.73px;font-size:8px;line-height:8px;color:#2a1010;white-space:nowrap;-webkit-text-stroke:0.22px currentColor;left:802.00px;transform-origin:0 0;transform:translateX(-2.00px) scaleX(0.9000);">3</div>
<svg class="a" style="left:737.5px;top:215.0px" width="15" height="15"><circle cx="7.5" cy="7.5" r="6" fill="#e83a32" stroke="#f6c9c5" stroke-width="1.6"/></svg>
<div class="t" id="t85" style="position:absolute;top:218.73px;font-size:8px;line-height:8px;color:#2a1010;white-space:nowrap;-webkit-text-stroke:0.22px currentColor;left:745.00px;transform-origin:0 0;transform:translateX(-2.00px) scaleX(0.9000);">3</div>
<svg class="a" style="left:853.5px;top:235.1px" width="15" height="15"><circle cx="7.5" cy="7.5" r="6" fill="#e83a32" stroke="#f6c9c5" stroke-width="1.6"/></svg>
<div class="t" id="t86" style="position:absolute;top:238.83px;font-size:8px;line-height:8px;color:#2a1010;white-space:nowrap;-webkit-text-stroke:0.22px currentColor;left:861.00px;transform-origin:0 0;transform:translateX(-4.01px) scaleX(0.9000);">22</div>
<svg class="a" style="left:832.5px;top:262.5px" width="15" height="15"><circle cx="7.5" cy="7.5" r="6" fill="#e83a32" stroke="#f6c9c5" stroke-width="1.6"/></svg>
<div class="t" id="t87" style="position:absolute;top:266.23px;font-size:8px;line-height:8px;color:#2a1010;white-space:nowrap;-webkit-text-stroke:0.22px currentColor;left:840.00px;transform-origin:0 0;transform:translateX(-2.00px) scaleX(0.9000);">9</div>
<svg class="a" style="left:765.5px;top:315.0px" width="15" height="15"><circle cx="7.5" cy="7.5" r="6" fill="#e83a32" stroke="#f6c9c5" stroke-width="1.6"/></svg>
<div class="t" id="t88" style="position:absolute;top:318.73px;font-size:8px;line-height:8px;color:#2a1010;white-space:nowrap;-webkit-text-stroke:0.22px currentColor;left:773.00px;transform-origin:0 0;transform:translateX(-4.01px) scaleX(0.9000);">19</div>
<svg class="a" style="left:608.1px;top:344.1px" width="15" height="15"><circle cx="7.5" cy="7.5" r="6" fill="#e83a32" stroke="#f6c9c5" stroke-width="1.6"/></svg>
<div class="t" id="t89" style="position:absolute;top:347.83px;font-size:8px;line-height:8px;color:#2a1010;white-space:nowrap;-webkit-text-stroke:0.22px currentColor;left:615.60px;transform-origin:0 0;transform:translateX(-2.00px) scaleX(0.9000);">3</div>
<svg class="a" style="left:680.9px;top:341.9px" width="15" height="15"><circle cx="7.5" cy="7.5" r="6" fill="#e83a32" stroke="#f6c9c5" stroke-width="1.6"/></svg>
<div class="t" id="t90" style="position:absolute;top:345.63px;font-size:8px;line-height:8px;color:#2a1010;white-space:nowrap;-webkit-text-stroke:0.22px currentColor;left:688.40px;transform-origin:0 0;transform:translateX(-3.74px) scaleX(0.9000);">11</div>
<svg class="a" style="left:778px;top:265px" width="38" height="38" viewBox="778 265 38 38">
<circle cx="796.6" cy="283.6" r="16.4" fill="#2fae4a"/>
<path d="M796.6,283.6 L783.85,273.28 A16.4,16.4 0 0 1 796.60,267.20 Z" fill="#f2b72a"/>
<path d="M796.6,283.6 L780.50,286.73 A16.4,16.4 0 0 1 783.85,273.28 Z" fill="#ee2a22"/>
</svg>
<div class="t" id="t91" style="position:absolute;top:278.76px;font-size:9.5px;line-height:9.5px;color:#151515;white-space:nowrap;font-weight:bold;left:797.50px;transform-origin:0 0;transform:translateX(-6.30px) scaleX(0.7945);text-shadow:0 0 1.5px #fff,0 0 1px #fff;">370</div>
<div class="t" id="t92" style="position:absolute;top:78.53px;font-size:8px;line-height:8px;color:#1e1e1e;white-space:nowrap;-webkit-text-stroke:0.22px currentColor;left:610.00px;transform-origin:0 0;transform:translateX(-6.41px) scaleX(0.9000);">3Ka</div>
<div class="t" id="t93" style="position:absolute;top:119.53px;font-size:8px;line-height:8px;color:#1e1e1e;white-space:nowrap;-webkit-text-stroke:0.22px currentColor;left:584.00px;transform-origin:0 0;transform:translateX(-6.41px) scaleX(0.9000);">3Kd</div>
<div class="t" id="t94" style="position:absolute;top:146.83px;font-size:8px;line-height:8px;color:#1e1e1e;white-space:nowrap;-webkit-text-stroke:0.22px currentColor;left:591.00px;transform-origin:0 0;transform:translateX(-6.41px) scaleX(0.9000);">3Ko</div>
<div class="t" id="t95" style="position:absolute;top:70.23px;font-size:8px;line-height:8px;color:#1e1e1e;white-space:nowrap;-webkit-text-stroke:0.22px currentColor;left:656.40px;transform-origin:0 0;transform:translateX(-5.41px) scaleX(0.9000);">3Kf</div>
<div class="t" id="t96" style="position:absolute;top:119.53px;font-size:8px;line-height:8px;color:#1e1e1e;white-space:nowrap;-webkit-text-stroke:0.22px currentColor;left:653.70px;transform-origin:0 0;transform:translateX(-6.41px) scaleX(0.9000);">3Ke</div>
<div class="t" id="t97" style="position:absolute;top:140.73px;font-size:8px;line-height:8px;color:#1e1e1e;white-space:nowrap;-webkit-text-stroke:0.22px currentColor;left:695.00px;transform-origin:0 0;transform:translateX(-5.41px) scaleX(0.9000);">3Kf</div>
<div class="t" id="t98" style="position:absolute;top:71.23px;font-size:8px;line-height:8px;color:#1e1e1e;white-space:nowrap;-webkit-text-stroke:0.22px currentColor;left:732.50px;transform-origin:0 0;transform:translateX(-6.41px) scaleX(0.9000);">3Ke</div>
<div class="t" id="t99" style="position:absolute;top:141.23px;font-size:8px;line-height:8px;color:#1e1e1e;white-space:nowrap;-webkit-text-stroke:0.22px currentColor;left:761.00px;transform-origin:0 0;transform:translateX(-6.41px) scaleX(0.9000);">3Kp</div>
<div class="t" id="t100" style="position:absolute;top:108.23px;font-size:8px;line-height:8px;color:#1e1e1e;white-space:nowrap;-webkit-text-stroke:0.22px currentColor;left:892.00px;transform-origin:0 0;transform:translateX(-5.41px) scaleX(0.9000);">3Kf</div>
<div class="t" id="t101" style="position:absolute;top:202.43px;font-size:8px;line-height:8px;color:#1e1e1e;white-space:nowrap;-webkit-text-stroke:0.22px currentColor;left:639.40px;transform-origin:0 0;transform:translateX(-6.01px) scaleX(0.9000);">3La</div>
<div class="t" id="t102" style="position:absolute;top:227.23px;font-size:8px;line-height:8px;color:#1e1e1e;white-space:nowrap;-webkit-text-stroke:0.22px currentColor;left:650.00px;transform-origin:0 0;transform:translateX(-6.01px) scaleX(0.9000);">3Lb</div>
<div class="t" id="t103" style="position:absolute;top:247.43px;font-size:8px;line-height:8px;color:#1e1e1e;white-space:nowrap;-webkit-text-stroke:0.22px currentColor;left:662.00px;transform-origin:0 0;transform:translateX(-5.81px) scaleX(0.9000);">3Lc</div>
<div class="t" id="t104" style="position:absolute;top:278.23px;font-size:8px;line-height:8px;color:#1e1e1e;white-space:nowrap;-webkit-text-stroke:0.22px currentColor;left:664.30px;transform-origin:0 0;transform:translateX(-6.01px) scaleX(0.9000);">3Ld</div>
<div class="t" id="t105" style="position:absolute;top:209.23px;font-size:8px;line-height:8px;color:#1e1e1e;white-space:nowrap;-webkit-text-stroke:0.22px currentColor;left:695.00px;transform-origin:0 0;transform:translateX(-5.81px) scaleX(0.9000);">3Lc</div>
<div class="t" id="t106" style="position:absolute;top:259.63px;font-size:8px;line-height:8px;color:#1e1e1e;white-space:nowrap;-webkit-text-stroke:0.22px currentColor;left:695.00px;transform-origin:0 0;transform:translateX(-6.01px) scaleX(0.9000);">3Lg</div>
<div class="t" id="t107" style="position:absolute;top:303.23px;font-size:8px;line-height:8px;color:#1e1e1e;white-space:nowrap;-webkit-text-stroke:0.22px currentColor;left:695.00px;transform-origin:0 0;transform:translateX(-6.01px) scaleX(0.9000);">3Lh</div>
<div class="t" id="t108" style="position:absolute;top:303.23px;font-size:8px;line-height:8px;color:#1e1e1e;white-space:nowrap;-webkit-text-stroke:0.22px currentColor;left:643.00px;transform-origin:0 0;transform:translateX(-4.81px) scaleX(0.9000);">3Lj</div>
<div class="t" id="t109" style="position:absolute;top:209.23px;font-size:8px;line-height:8px;color:#1e1e1e;white-space:nowrap;-webkit-text-stroke:0.22px currentColor;left:814.00px;transform-origin:0 0;transform:translateX(-6.01px) scaleX(0.9000);">3Le</div>
<div class="t" id="t110" style="position:absolute;top:258.93px;font-size:8px;line-height:8px;color:#1e1e1e;white-space:nowrap;-webkit-text-stroke:0.22px currentColor;left:746.60px;transform-origin:0 0;transform:translateX(-7.00px) scaleX(0.9000);">3Lm</div>
<div class="t" id="t111" style="position:absolute;top:259.23px;font-size:8px;line-height:8px;color:#1e1e1e;white-space:nowrap;-webkit-text-stroke:0.22px currentColor;left:814.00px;transform-origin:0 0;transform:translateX(-6.01px) scaleX(0.9000);">3Ln</div>
<div class="t" id="t112" style="position:absolute;top:302.23px;font-size:8px;line-height:8px;color:#1e1e1e;white-space:nowrap;-webkit-text-stroke:0.22px currentColor;left:746.60px;transform-origin:0 0;transform:translateX(-5.20px) scaleX(0.9000);">3Lr</div>
<div class="t" id="t113" style="position:absolute;top:303.23px;font-size:8px;line-height:8px;color:#1e1e1e;white-space:nowrap;-webkit-text-stroke:0.22px currentColor;left:814.00px;transform-origin:0 0;transform:translateX(-5.81px) scaleX(0.9000);">3Lk</div>
<div class="t" id="t114" style="position:absolute;top:344.73px;font-size:8px;line-height:8px;color:#1e1e1e;white-space:nowrap;-webkit-text-stroke:0.22px currentColor;left:814.00px;transform-origin:0 0;transform:translateX(-6.61px) scaleX(0.9000);">3Nb</div>
<div class="t" id="t115" style="position:absolute;top:266.73px;font-size:8px;line-height:8px;color:#1e1e1e;white-space:nowrap;-webkit-text-stroke:0.22px currentColor;left:537.00px;transform-origin:0 0;transform:translateX(-8.81px) scaleX(0.9000);">3PSa</div>
<div class="t" id="t116" style="position:absolute;top:274.23px;font-size:8px;line-height:8px;color:#1e1e1e;white-space:nowrap;-webkit-text-stroke:0.22px currentColor;left:568.00px;transform-origin:0 0;transform:translateX(-8.81px) scaleX(0.9000);">3PSb</div>
<div class="t" id="t117" style="position:absolute;top:282.23px;font-size:8px;line-height:8px;color:#1e1e1e;white-space:nowrap;-webkit-text-stroke:0.22px currentColor;left:607.00px;transform-origin:0 0;transform:translateX(-8.61px) scaleX(0.9000);">3PSk</div>
<div class="t" id="t118" style="position:absolute;top:306.93px;font-size:8px;line-height:8px;color:#1e1e1e;white-space:nowrap;-webkit-text-stroke:0.22px currentColor;left:552.80px;transform-origin:0 0;transform:translateX(-8.81px) scaleX(0.9000);">3PSe</div>
<div class="t" id="t119" style="position:absolute;top:322.23px;font-size:8px;line-height:8px;color:#1e1e1e;white-space:nowrap;-webkit-text-stroke:0.22px currentColor;left:593.00px;transform-origin:0 0;transform:translateX(-7.61px) scaleX(0.9000);">3PSl</div>
<div class="t" id="t120" style="position:absolute;top:347.23px;font-size:8px;line-height:8px;color:#1e1e1e;white-space:nowrap;-webkit-text-stroke:0.22px currentColor;left:551.00px;transform-origin:0 0;transform:translateX(-8.81px) scaleX(0.9000);">3PSg</div>
<div class="t" id="t121" style="position:absolute;top:344.73px;font-size:8px;line-height:8px;color:#1e1e1e;white-space:nowrap;-webkit-text-stroke:0.22px currentColor;left:636.40px;transform-origin:0 0;transform:translateX(-5.81px) scaleX(0.9000);">3 la</div>
<div class="t" id="t122" style="position:absolute;top:216.03px;font-size:10px;line-height:10px;color:#6f6f6f;white-space:nowrap;-webkit-text-stroke:0.22px currentColor;font-style:italic;left:569.80px;transform-origin:0 0;transform:translateX(-32.00px) scaleX(1.0010);">Newfoundland</div>
<div class="t" id="t123" style="position:absolute;top:123.50px;font-size:13px;line-height:13px;color:#3a78c0;white-space:nowrap;font-weight:bold;font-style:italic;left:645.00px;transform-origin:0 0;transform:translateX(-52.00px) scaleX(1.1370);font-family:'Liberation Serif';letter-spacing:1px;">Newfoundland</div>
<div class="t" id="t124" style="position:absolute;top:139.50px;font-size:13px;line-height:13px;color:#3a78c0;white-space:nowrap;font-weight:bold;font-style:italic;left:645.60px;transform-origin:0 0;transform:translateX(-12.50px) scaleX(1.1111);font-family:'Liberation Serif';letter-spacing:1px;">Sea</div>
<div class="t" id="t125" style="position:absolute;top:320.38px;font-size:9px;line-height:9px;color:#6b6b6b;white-space:nowrap;-webkit-text-stroke:0.22px currentColor;font-style:italic;left:565.00px;transform-origin:0 0;transform:translateX(-19.00px) scaleX(1.0129);">St. Pierre</div>
<div class="t" id="t126" style="position:absolute;top:329.38px;font-size:9px;line-height:9px;color:#6b6b6b;white-space:nowrap;-webkit-text-stroke:0.22px currentColor;font-style:italic;left:568.00px;transform-origin:0 0;transform:translateX(-10.00px) scaleX(0.9749);">Bank</div>
<div class="t" id="t127" style="position:absolute;top:332.92px;font-size:6px;line-height:6px;color:#777;white-space:nowrap;-webkit-text-stroke:0.22px currentColor;left:534.00px;transform-origin:0 0;transform:translateX(0.00px) scaleX(1.0000);">165 km</div>
<div class="a" style="left:556px;top:336px;width:60px;height:2px;background:#333"></div>
<div class="t" id="t128" style="position:absolute;top:341.92px;font-size:6px;line-height:6px;color:#888;white-space:nowrap;-webkit-text-stroke:0.22px currentColor;left:534.00px;transform-origin:0 0;transform:translateX(0.00px) scaleX(1.0208);">Map Scale 1:4,033,604</div>
<div class="t" id="t129" style="position:absolute;top:339.50px;font-size:13px;line-height:13px;color:#555;white-space:nowrap;-webkit-text-stroke:0.22px currentColor;font-style:italic;left:714.50px;transform-origin:0 0;transform:translateX(-45.50px) scaleX(0.8722);letter-spacing:1px;">Grand Banks of</div>
<div class="t" id="t130" style="position:absolute;top:264.04px;font-size:10px;line-height:10px;color:#5a6a80;white-space:nowrap;-webkit-text-stroke:0.22px currentColor;font-style:italic;left:895.00px;transform-origin:0 0;transform:translateX(-18.00px) scaleX(1.0281);">Flemish</div>
<div class="t" id="t131" style="position:absolute;top:275.54px;font-size:10px;line-height:10px;color:#5a6a80;white-space:nowrap;-webkit-text-stroke:0.22px currentColor;font-style:italic;left:895.00px;transform-origin:0 0;transform:translateX(-9.00px) scaleX(0.9804);">Cap</div>
<div class="t" id="t132" style="position:absolute;top:41.19px;font-size:11px;line-height:11px;color:#4a5468;white-space:nowrap;-webkit-text-stroke:0.22px currentColor;font-style:italic;left:1200.50px;transform-origin:0 0;transform:translateX(-33.50px) scaleX(0.8349);letter-spacing:1px;">Charlie-Gibbs</div>
<div class="t" id="t133" style="position:absolute;top:208.07px;font-size:7px;line-height:7px;color:#5a6478;white-space:nowrap;-webkit-text-stroke:0.22px currentColor;font-style:italic;left:1069.00px;transform-origin:0 0;transform:translateX(-7.79px) scaleX(1.0000);">3426</div>
<div class="t" id="t134" style="position:absolute;top:220.07px;font-size:7px;line-height:7px;color:#5a6478;white-space:nowrap;-webkit-text-stroke:0.22px currentColor;font-style:italic;left:1188.00px;transform-origin:0 0;transform:translateX(-7.79px) scaleX(1.0000);">1868</div>
<div class="t" id="t135" style="position:absolute;top:251.07px;font-size:7px;line-height:7px;color:#5a6478;white-space:nowrap;-webkit-text-stroke:0.22px currentColor;font-style:italic;left:898.00px;transform-origin:0 0;transform:translateX(-3.90px) scaleX(1.0000);">86</div>
<div class="t" id="t136" style="position:absolute;top:341.23px;font-size:8px;line-height:8px;color:#7a8aa0;white-space:nowrap;-webkit-text-stroke:0.22px currentColor;left:913.50px;transform-origin:0 0;transform:translateX(-9.62px) scaleX(1.0000);">©201</div>
<div class="t" id="t137" style="position:absolute;top:296.07px;font-size:7px;line-height:7px;color:#5a6478;white-space:nowrap;-webkit-text-stroke:0.22px currentColor;font-style:italic;left:1418.00px;transform-origin:0 0;transform:translateX(-7.79px) scaleX(1.0000);">3988</div>
<div class="t" id="t138" style="position:absolute;top:349.07px;font-size:7px;line-height:7px;color:#5a6478;white-space:nowrap;-webkit-text-stroke:0.22px currentColor;font-style:italic;left:1395.00px;transform-origin:0 0;transform:translateX(-5.84px) scaleX(1.0000);">907</div>
<div class="t" id="t139" style="position:absolute;top:29.07px;font-size:7px;line-height:7px;color:#5a6478;white-space:nowrap;-webkit-text-stroke:0.22px currentColor;font-style:italic;left:1013.00px;transform-origin:0 0;transform:translateX(-7.79px) scaleX(1.0000);">2330</div>
<div class="t" id="t140" style="position:absolute;top:48.19px;font-size:11px;line-height:11px;color:#4a5468;white-space:nowrap;-webkit-text-stroke:0.22px currentColor;font-style:italic;left:1273.00px;transform-origin:0 0;transform:translateX(-33.00px) scaleX(0.8040);letter-spacing:1px;">Fracture Zone</div>
<div class="t" id="t141" style="position:absolute;top:49.57px;font-size:7px;line-height:7px;color:#5a6478;white-space:nowrap;-webkit-text-stroke:0.22px currentColor;font-style:italic;left:1331.00px;transform-origin:0 0;transform:translateX(-7.79px) scaleX(1.0000);">4859</div>
<div class="t" id="t142" style="position:absolute;top:75.57px;font-size:7px;line-height:7px;color:#5a6478;white-space:nowrap;-webkit-text-stroke:0.22px currentColor;font-style:italic;left:1330.00px;transform-origin:0 0;transform:translateX(-5.84px) scaleX(1.0000);">817</div>
<div class="t" id="t143" style="position:absolute;top:102.57px;font-size:7px;line-height:7px;color:#5a6478;white-space:nowrap;-webkit-text-stroke:0.22px currentColor;font-style:italic;left:1235.00px;transform-origin:0 0;transform:translateX(-7.79px) scaleX(1.0000);">4752</div>
<div class="t" id="t144" style="position:absolute;top:204.57px;font-size:7px;line-height:7px;color:#5a6478;white-space:nowrap;-webkit-text-stroke:0.22px currentColor;font-style:italic;left:1394.00px;transform-origin:0 0;transform:translateX(-5.84px) scaleX(1.0000);">732</div>
<div class="a" style="left:979px;top:145px;width:0;height:0;"><div style="position:absolute;left:0;top:0;transform:rotate(50.8deg);transform-origin:0 0;"><div style="position:absolute;left:-95px;top:-7px;width:190px;text-align:center;font-size:10px;font-style:italic;color:#3e4a5e;letter-spacing:0.6px;white-space:nowrap;line-height:14px">Northwest Atlantic Mid-Ocean Canyon</div></div></div>
<div class="a" style="left:1002px;top:36px;width:63.5px;height:15.5px;border-radius:8px;background:#22344c;border:1.5px solid #c8ccd0"></div>
<div class="t" id="t145" style="position:absolute;top:39.76px;font-size:9.5px;line-height:9.5px;color:#fff;white-space:nowrap;font-weight:bold;font-style:italic;left:1034.50px;transform-origin:0 0;transform:translateX(-27.00px) scaleX(0.7633);">Close Selection</div>
<svg class="a" style="left:1101px;top:216px" width="12" height="14" viewBox="0 0 12 14"><path d="M1 1 L1 11 L3.5 8.5 L5.5 12.5 L7 11.8 L5 8 L8.5 8 Z" fill="#fff" stroke="#222" stroke-width="0.9"/></svg>
<div class="a" style="left:529.5px;top:32.5px;width:173.5px;height:27px;background:#25384f;border-bottom-right-radius:6px"></div>
<div class="a" style="left:620.5px;top:36px;width:1.2px;height:20px;background:#8a6a4a"></div>
<svg class="a" style="left:536px;top:38px" width="18" height="18" viewBox="0 0 18 18">
<path d="M5.2 15.5 L2.2 9.8 Q1.6 8.6 2.6 8.2 Q3.5 7.9 4.1 8.9 L5.3 10.6 L5.3 3.2 Q5.3 2.2 6.3 2.2 Q7.2 2.2 7.2 3.2 L7.2 8.2 L7.4 1.8 Q7.5 0.9 8.4 0.9 Q9.3 0.9 9.3 1.9 L9.3 8.2 L9.6 2.4 Q9.7 1.5 10.6 1.5 Q11.5 1.6 11.4 2.5 L11.3 8.6 L11.9 4.2 Q12.1 3.3 12.9 3.4 Q13.7 3.6 13.6 4.5 L13.2 10.8 Q13 14 11.5 15.5 Z" fill="#fff"/>
<rect x="14.2" y="13.6" width="1.6" height="2.8" fill="#fff"/></svg>
<svg class="a" style="left:567px;top:40px" width="18" height="12" viewBox="0 0 18 12"><rect x="1" y="1" width="15.6" height="9.8" fill="none" stroke="#fff" stroke-width="1.4"/><text x="8.8" y="7.6" text-anchor="middle" font-family="Liberation Sans" font-size="6.5" font-weight="bold" fill="#fff">123</text><path d="M4 9 L13.5 9" stroke="#fff" stroke-width="0.8" stroke-dasharray="1.2 1"/></svg>
<svg class="a" style="left:596px;top:38px" width="18" height="16" viewBox="0 0 18 16"><path d="M2.4 8.4 L13.8 2 L16.3 14 L2.4 14 Z" fill="none" stroke="#fff" stroke-width="1.2"/><rect x="1.6" y="7.6" width="1.6" height="1.6" fill="#fff"/><rect x="13" y="1.2" width="1.6" height="1.6" fill="#fff"/><rect x="15.5" y="13.2" width="1.6" height="1.6" fill="#fff"/><rect x="1.6" y="13.2" width="1.6" height="1.6" fill="#fff"/></svg>
<svg class="a" style="left:632px;top:40px" width="12" height="16" viewBox="0 0 12 16"><path d="M1.3 0.8 L1.3 12.8 L4.4 10 L6.9 14.6 L8.6 13.8 L6.3 9.3 L10.4 9.3 Z" fill="#47bdf0"/></svg>
<svg class="a" style="left:655px;top:41px" width="12" height="12" viewBox="0 0 12 12"><g transform="translate(6 6)"><path d="M-1.1 -5 L1.1 -5 L1.4 -3.4 L2.6 -2.9 L3.9 -3.9 L5 -2.3 L3.7 -1.2 L3.7 1.2 L5 2.3 L3.9 3.9 L2.6 2.9 L1.4 3.4 L1.1 5 L-1.1 5 L-1.4 3.4 L-2.6 2.9 L-3.9 3.9 L-5 2.3 L-3.7 1.2 L-3.7 -1.2 L-5 -2.3 L-3.9 -3.9 L-2.6 -2.9 L-1.4 -3.4 Z" fill="#fff"/><circle r="1.5" fill="#25384f"/></g></svg>
<svg class="a" style="left:680px;top:39px" width="17" height="16" viewBox="0 0 17 16"><path d="M1.5 14.2 L2.4 10.4 L10.6 2.2 Q11.4 1.4 12.2 2.2 L13.8 3.8 Q14.6 4.6 13.8 5.4 L5.6 13.6 Z" fill="none" stroke="#fff" stroke-width="1.5"/><path d="M2.4 10.4 L5.6 13.6 L1.5 14.2 Z" fill="#fff"/><path d="M11.5 12.5 L15.5 12.5 L13.5 14.5 Z" fill="#fff"/></svg>
<div class="a" style="left:534px;top:71.5px;width:19px;height:19px;border-radius:50%;background:#25384f;box-shadow:0 0 1px #fff"></div>
<div class="a" style="left:534px;top:96.3px;width:19px;height:19px;border-radius:50%;background:#25384f;box-shadow:0 0 1px #fff"></div>
<div class="a" style="left:538.5px;top:80px;width:10px;height:2.2px;background:#fff"></div>
<div class="a" style="left:542.4px;top:76px;width:2.2px;height:10px;background:#fff"></div>
<div class="a" style="left:538.5px;top:104.8px;width:10px;height:2.2px;background:#fff"></div>
<div class="a" style="left:529px;top:31px;width:901px;height:1.5px;background:#c4c8cd"></div>
<div class="a" style="left:1426px;top:31px;width:4px;height:325px;background:#7d8590"></div>
<div class="a" style="left:529px;top:356px;width:901px;height:4px;background:#a0a6ad"></div>
<div class="a" style="left:1235px;top:33px;width:191px;height:206.5px;background:rgba(134,166,211,0.8);border-left:1.5px solid #8896a8;border-bottom:1.5px solid #8896a8"></div>
<div class="a" style="left:1409px;top:34.5px;width:16px;height:16px;background:rgba(120,170,225,0.55)"></div>
<svg class="a" style="left:1410px;top:35px" width="15" height="14"><path d="M5 2 L10 2 L10 6 L12.5 6 L7.5 10 L2.5 6 L5 6 Z" fill="#a8c6ec"/><rect x="2.5" y="11" width="10" height="1.2" fill="#a8c6ec"/></svg>
<svg class="a" style="left:1385px;top:50px" width="30" height="38" viewBox="1385 50 30 38"><path d="M1400.8 52.3 L1390.6 72.7 L1401.4 67 Z" fill="none" stroke="#7090c0" stroke-width="0.9"/><path d="M1400.8 52.3 L1411.6 72.7 L1401.4 67 Z" fill="#7092c4"/><path d="M1396.5 85 L1396.5 75 L1404.5 85 L1404.5 75" fill="none" stroke="#7090c0" stroke-width="1"/></svg>
<div class="a" style="left:1260px;top:43.7px;width:8px;height:2px;background:#2f7cf0"></div>
<div class="t" id="t146" style="position:absolute;top:40.38px;font-size:9px;line-height:9px;color:#f4f6f8;white-space:nowrap;font-weight:bold;left:1279.30px;transform-origin:0 0;transform:translateX(0.00px) scaleX(0.7962);">Study Area Boundary</div>
<div class="a" style="left:1260px;top:69.7px;width:8px;height:2px;background:#111"></div>
<div class="t" id="t147" style="position:absolute;top:66.38px;font-size:9px;line-height:9px;color:#f4f6f8;white-space:nowrap;font-weight:bold;left:1279.30px;transform-origin:0 0;transform:translateX(0.00px) scaleX(0.8391);">200 Nautical Mile Limit</div>
<svg class="a" style="left:1240px;top:93px" width="6" height="6"><path d="M0.5 1 L5.5 1 L3 4.5 Z" fill="#2fae4a"/></svg>
<div class="t" id="t148" style="position:absolute;top:91.38px;font-size:9px;line-height:9px;color:#f4f6f8;white-space:nowrap;font-weight:bold;left:1253.40px;transform-origin:0 0;transform:translateX(0.00px) scaleX(0.8207);">Offshore Wells</div>
<div class="a" style="left:1272.3px;top:111.3px;width:5px;height:5px;border-radius:50%;background:#f2b72a"></div>
<div class="t" id="t149" style="position:absolute;top:109.38px;font-size:9px;line-height:9px;color:#eef2f6;white-space:nowrap;-webkit-text-stroke:0.22px currentColor;left:1289.80px;transform-origin:0 0;transform:translateX(0.00px) scaleX(0.8883);">Delineation</div>
<div class="a" style="left:1272.3px;top:128.2px;width:5px;height:5px;border-radius:50%;background:#2fae4a"></div>
<div class="t" id="t150" style="position:absolute;top:126.28px;font-size:9px;line-height:9px;color:#eef2f6;white-space:nowrap;-webkit-text-stroke:0.22px currentColor;left:1289.80px;transform-origin:0 0;transform:translateX(0.00px) scaleX(0.8674);">Development</div>
<div class="a" style="left:1272.3px;top:145.5px;width:5px;height:5px;border-radius:50%;background:#ee2a22"></div>
<div class="t" id="t151" style="position:absolute;top:143.58px;font-size:9px;line-height:9px;color:#eef2f6;white-space:nowrap;-webkit-text-stroke:0.22px currentColor;left:1289.80px;transform-origin:0 0;transform:translateX(0.00px) scaleX(0.9105);">Exploration</div>
<div class="a" style="left:1272.3px;top:162.3px;width:5px;height:5px;border-radius:50%;background:#7a3ab0"></div>
<div class="t" id="t152" style="position:absolute;top:160.38px;font-size:9px;line-height:9px;color:#eef2f6;white-space:nowrap;-webkit-text-stroke:0.22px currentColor;left:1289.80px;transform-origin:0 0;transform:translateX(0.00px) scaleX(0.8712);">Exploration / Delineation</div>
<div class="a" style="left:1260px;top:187px;width:8.5px;height:8.5px;border:1.2px solid #2a3c5c"></div>
<div class="t" id="t153" style="position:absolute;top:186.88px;font-size:9px;line-height:9px;color:#f4f6f8;white-space:nowrap;font-weight:bold;left:1279.30px;transform-origin:0 0;transform:translateX(0.00px) scaleX(0.8162);">Domestic Commercial Fish Landings</div>
<div class="a" style="left:1260px;top:213px;width:8.7px;height:8.7px;background:#c4141a"></div>
<div class="t" id="t154" style="position:absolute;top:212.88px;font-size:9px;line-height:9px;color:#f4f6f8;white-space:nowrap;font-weight:bold;left:1279.30px;transform-origin:0 0;transform:translateX(0.00px) scaleX(0.8134);">Areas Of Interest</div>
<div class="a" style="left:1170px;top:2px;width:26px;height:26px;border-radius:50%;background:transparent;border:2.2px solid #d4d6d8"></div>
<div class="a" style="left:1202.7px;top:2px;width:26px;height:26px;border-radius:50%;background:transparent;border:2.2px solid #d4d6d8"></div>
<div class="a" style="left:1234.8px;top:2px;width:26px;height:26px;border-radius:50%;background:#3b4d64;border:2.2px solid #d4d6d8"></div>
<div class="a" style="left:1267.8px;top:2px;width:26px;height:26px;border-radius:50%;background:#3d4e64;border:2.2px solid #d4d6d8"></div>
<div class="a" style="left:1300px;top:2px;width:26px;height:26px;border-radius:50%;background:#3b4d64;border:2.2px solid #d4d6d8"></div>
<div class="a" style="left:1332.5px;top:2px;width:26px;height:26px;border-radius:50%;background:transparent;border:2.2px solid #d4d6d8"></div>
<svg class="a" style="left:1176px;top:8px" width="14" height="14"><rect x="0.5" y="0.5" width="13" height="13" rx="1" fill="#fff"/><rect x="3" y="8" width="1.6" height="3.5" fill="#7a2a8a"/><rect x="6" y="6" width="1.6" height="5.5" fill="#c42a5a"/><rect x="9" y="3.5" width="1.6" height="8" fill="#7a2a8a"/></svg>
<svg class="a" style="left:1207px;top:6px" width="18" height="18"><path d="M9 2 L16 6 L9 10 L2 6 Z" fill="#fff"/><path d="M2.5 9 L9 12.8 L15.5 9" fill="none" stroke="#fff" stroke-width="1.6"/></svg>
<svg class="a" style="left:1240px;top:9px" width="16" height="13" viewBox="0 0 16 13"><path d="M0.6 0.8 L7.4 0.8 L7.4 11 Q4 10 0.6 11.5 Z" fill="#3ab4ee"/><path d="M8.4 0.8 L15.2 0.8 L15.2 11.5 Q11.8 10 8.4 11 Z" fill="#3ab4ee"/><rect x="9.8" y="2.6" width="4" height="6.6" fill="none" stroke="#2a4a78" stroke-width="0.9"/><path d="M10.6 4.6 L13 4.6 M10.6 6.3 L13 6.3 M10.6 8 L13 8" stroke="#2a4a78" stroke-width="0.7"/></svg>
<svg class="a" style="left:1270px;top:4px" width="22" height="22" viewBox="1270 4 22 22"><rect x="1275" y="9.1" width="12.3" height="2.5" fill="#7c7c7c"/><rect x="1275.2" y="13.6" width="2.8" height="7.4" fill="#7c7c7c"/><rect x="1279.8" y="13.6" width="2.8" height="7.4" fill="#7c7c7c"/><rect x="1284.4" y="13.6" width="2.8" height="7.4" fill="#7c7c7c"/></svg>
<svg class="a" style="left:1302px;top:4px" width="22" height="22" viewBox="1302 4 22 22"><rect x="1307.6" y="9.3" width="11" height="11.2" fill="none" stroke="#3ab4ee" stroke-width="1.3"/><path d="M1310 12 L1310.8 12 M1312.3 12 L1316.4 12 M1310 14.8 L1310.8 14.8 M1312.3 14.8 L1316.4 14.8 M1310 17.6 L1310.8 17.6 M1312.3 17.6 L1316.4 17.6" stroke="#3ab4ee" stroke-width="1.1"/></svg>
<svg class="a" style="left:1334px;top:4px" width="22" height="22" viewBox="1334 4 22 22"><circle cx="1344.4" cy="13" r="3.6" fill="none" stroke="#fff" stroke-width="1.6"/><path d="M1347 15.8 L1350.8 19.8" stroke="#fff" stroke-width="1.9" stroke-linecap="round"/></svg>
<div class="a" style="left:1368.3px;top:7.2px;width:23.6px;height:3px;background:#fff"></div>
<div class="a" style="left:1368.3px;top:13.5px;width:23.6px;height:3px;background:#fff"></div>
<div class="a" style="left:1368.3px;top:19.6px;width:23.6px;height:3px;background:#fff"></div>
<svg class="a" style="left:1400px;top:0px" width="30" height="30" viewBox="0 0 30 30">
<defs><linearGradient id="lg2" x1="0" y1="0" x2="1" y2="1"><stop offset="0" stop-color="#ffd21e"/><stop offset="0.5" stop-color="#f78a14"/><stop offset="1" stop-color="#d42a10"/></linearGradient></defs>
<path d="M3 3 L26 -1 L26 29 L3 29 Z" fill="url(#lg2)"/>
<path d="M1.4 15.4 L22 15.4 L23.6 19.6 L22 23.9 L1.4 23.9 Z" fill="#3b5268"/>
<text x="11.3" y="23" font-family="Liberation Sans" font-weight="bold" font-size="8.3" fill="#f0f0f0" textLength="8.6" lengthAdjust="spacingAndGlyphs">ICI</text>
</svg>
<div class="a" style="left:529px;top:360px;width:901px;height:189px;background:#1f262e"></div>
<div class="a" style="left:529px;top:360px;width:897px;height:25px;background:#22364f"></div>
<div class="a" style="left:529px;top:385px;width:897px;height:5px;background:#22282f"></div>
<div class="t" id="t155" style="position:absolute;top:368.69px;font-size:11px;line-height:11px;color:#eef0f2;white-space:nowrap;font-weight:bold;left:532.00px;transform-origin:0 0;transform:translateX(0.00px) scaleX(0.7318);">Domestic Commercial Fish Lan...</div>
<div class="a" style="left:535px;top:390px;width:874px;height:2px;background:#6d7075"></div>
<div class="a" style="left:535px;top:391.5px;width:874px;height:21px;background:#212429"></div>
<div class="a" style="left:535px;top:412.5px;width:874px;height:1.6px;background:#3b8fc0"></div>
<div class="a" style="left:535px;top:414px;width:874px;height:132px;background:#3c4755"></div>
<div class="a" style="left:535px;top:426.4px;width:874px;height:1.1px;background:#c7ccd2"></div>
<div class="a" style="left:535px;top:442.9px;width:874px;height:1.1px;background:#c7ccd2"></div>
<div class="a" style="left:535px;top:458.8px;width:874px;height:1.1px;background:#c7ccd2"></div>
<div class="a" style="left:535px;top:474.4px;width:874px;height:1.1px;background:#c7ccd2"></div>
<div class="a" style="left:535px;top:490.7px;width:874px;height:1.1px;background:#c7ccd2"></div>
<div class="a" style="left:535px;top:506.4px;width:874px;height:1.1px;background:#c7ccd2"></div>
<div class="a" style="left:535px;top:522.4px;width:874px;height:1.1px;background:#c7ccd2"></div>
<div class="a" style="left:535px;top:537.8px;width:874px;height:1.1px;background:#c7ccd2"></div>
<div class="a" style="left:709.9px;top:391px;width:1.1px;height:155px;background:#c7ccd2"></div>
<div class="a" style="left:884.9px;top:391px;width:1.1px;height:155px;background:#c7ccd2"></div>
<div class="a" style="left:1058.4px;top:391px;width:1.1px;height:155px;background:#c7ccd2"></div>
<div class="a" style="left:1233.9px;top:391px;width:1.1px;height:155px;background:#c7ccd2"></div>
<div class="t" id="t156" style="position:absolute;top:397.19px;font-size:11px;line-height:11px;color:#f0f0f0;white-space:nowrap;-webkit-text-stroke:0.22px currentColor;left:541.30px;transform-origin:0 0;transform:translateX(0.00px) scaleX(0.8800);">UniqueID</div>
<div class="t" id="t157" style="position:absolute;top:397.19px;font-size:11px;line-height:11px;color:#f0f0f0;white-space:nowrap;-webkit-text-stroke:0.22px currentColor;left:716.30px;transform-origin:0 0;transform:translateX(0.00px) scaleX(0.8800);">Species</div>
<div class="t" id="t158" style="position:absolute;top:397.19px;font-size:11px;line-height:11px;color:#f0f0f0;white-space:nowrap;-webkit-text-stroke:0.22px currentColor;left:891.00px;transform-origin:0 0;transform:translateX(0.00px) scaleX(0.8800);">GearType</div>
<div class="t" id="t159" style="position:absolute;top:397.19px;font-size:11px;line-height:11px;color:#f0f0f0;white-space:nowrap;-webkit-text-stroke:0.22px currentColor;left:1065.00px;transform-origin:0 0;transform:translateX(0.00px) scaleX(0.8800);">Weight</div>
<div class="t" id="t160" style="position:absolute;top:397.19px;font-size:11px;line-height:11px;color:#f0f0f0;white-space:nowrap;-webkit-text-stroke:0.22px currentColor;left:1240.00px;transform-origin:0 0;transform:translateX(0.00px) scaleX(0.8800);">Value</div>
<div class="t" id="t161" style="position:absolute;top:414.46px;font-size:9.5px;line-height:9.5px;color:#eef0f2;white-space:nowrap;font-weight:bold;left:541.30px;transform-origin:0 0;transform:translateX(0.00px) scaleX(0.7800);">Total count:</div>
<div class="t" id="t162" style="position:absolute;top:414.04px;font-size:10px;line-height:10px;color:#e8e8e8;white-space:nowrap;-webkit-text-stroke:0.22px currentColor;left:704.00px;transform-origin:0 0;transform:translateX(-10.01px) scaleX(0.9000);">39</div>
<div class="t" id="t163" style="position:absolute;top:414.04px;font-size:10px;line-height:10px;color:#e8e8e8;white-space:nowrap;-webkit-text-stroke:0.22px currentColor;left:879.00px;transform-origin:0 0;transform:translateX(-10.01px) scaleX(0.9000);">39</div>
<div class="t" id="t164" style="position:absolute;top:430.56px;font-size:9.5px;line-height:9.5px;color:#eef0f2;white-space:nowrap;font-weight:bold;left:541.30px;transform-origin:0 0;transform:translateX(0.00px) scaleX(0.7800);">Count:</div>
<div class="t" id="t165" style="position:absolute;top:430.14px;font-size:10px;line-height:10px;color:#e8e8e8;white-space:nowrap;-webkit-text-stroke:0.22px currentColor;left:704.00px;transform-origin:0 0;transform:translateX(-3.01px) scaleX(0.9000);">-</div>
<div class="t" id="t166" style="position:absolute;top:430.14px;font-size:10px;line-height:10px;color:#e8e8e8;white-space:nowrap;-webkit-text-stroke:0.22px currentColor;left:879.00px;transform-origin:0 0;transform:translateX(-3.01px) scaleX(0.9000);">-</div>
<div class="t" id="t167" style="position:absolute;top:446.16px;font-size:9.5px;line-height:9.5px;color:#eef0f2;white-space:nowrap;font-weight:bold;left:541.30px;transform-origin:0 0;transform:translateX(0.00px) scaleX(0.7800);">Sum:</div>
<div class="t" id="t168" style="position:absolute;top:445.74px;font-size:10px;line-height:10px;color:#e8e8e8;white-space:nowrap;-webkit-text-stroke:0.22px currentColor;left:704.00px;transform-origin:0 0;transform:translateX(-3.01px) scaleX(0.9000);">-</div>
<div class="t" id="t169" style="position:absolute;top:445.74px;font-size:10px;line-height:10px;color:#e8e8e8;white-space:nowrap;-webkit-text-stroke:0.22px currentColor;left:879.00px;transform-origin:0 0;transform:translateX(-3.01px) scaleX(0.9000);">-</div>
<div class="t" id="t170" style="position:absolute;top:462.16px;font-size:9.5px;line-height:9.5px;color:#eef0f2;white-space:nowrap;font-weight:bold;left:541.30px;transform-origin:0 0;transform:translateX(0.00px) scaleX(0.7800);">Minimum:</div>
<div class="t" id="t171" style="position:absolute;top:461.74px;font-size:10px;line-height:10px;color:#e8e8e8;white-space:nowrap;-webkit-text-stroke:0.22px currentColor;left:704.00px;transform-origin:0 0;transform:translateX(-3.01px) scaleX(0.9000);">-</div>
<div class="t" id="t172" style="position:absolute;top:461.74px;font-size:10px;line-height:10px;color:#e8e8e8;white-space:nowrap;-webkit-text-stroke:0.22px currentColor;left:879.00px;transform-origin:0 0;transform:translateX(-3.01px) scaleX(0.9000);">-</div>
<div class="t" id="t173" style="position:absolute;top:477.76px;font-size:9.5px;line-height:9.5px;color:#eef0f2;white-space:nowrap;font-weight:bold;left:541.30px;transform-origin:0 0;transform:translateX(0.00px) scaleX(0.7800);">Maximum:</div>
<div class="t" id="t174" style="position:absolute;top:477.34px;font-size:10px;line-height:10px;color:#e8e8e8;white-space:nowrap;-webkit-text-stroke:0.22px currentColor;left:704.00px;transform-origin:0 0;transform:translateX(-3.01px) scaleX(0.9000);">-</div>
<div class="t" id="t175" style="position:absolute;top:477.34px;font-size:10px;line-height:10px;color:#e8e8e8;white-space:nowrap;-webkit-text-stroke:0.22px currentColor;left:879.00px;transform-origin:0 0;transform:translateX(-3.01px) scaleX(0.9000);">-</div>
<div class="t" id="t176" style="position:absolute;top:493.36px;font-size:9.5px;line-height:9.5px;color:#eef0f2;white-space:nowrap;font-weight:bold;left:541.30px;transform-origin:0 0;transform:translateX(0.00px) scaleX(0.7800);">Mean:</div>
<div class="t" id="t177" style="position:absolute;top:492.94px;font-size:10px;line-height:10px;color:#e8e8e8;white-space:nowrap;-webkit-text-stroke:0.22px currentColor;left:704.00px;transform-origin:0 0;transform:translateX(-3.01px) scaleX(0.9000);">-</div>
<div class="t" id="t178" style="position:absolute;top:492.94px;font-size:10px;line-height:10px;color:#e8e8e8;white-space:nowrap;-webkit-text-stroke:0.22px currentColor;left:879.00px;transform-origin:0 0;transform:translateX(-3.01px) scaleX(0.9000);">-</div>
<div class="t" id="t179" style="position:absolute;top:509.26px;font-size:9.5px;line-height:9.5px;color:#eef0f2;white-space:nowrap;font-weight:bold;left:541.30px;transform-origin:0 0;transform:translateX(0.00px) scaleX(0.7800);">Median:</div>
<div class="t" id="t180" style="position:absolute;top:508.83px;font-size:10px;line-height:10px;color:#e8e8e8;white-space:nowrap;-webkit-text-stroke:0.22px currentColor;left:704.00px;transform-origin:0 0;transform:translateX(-3.01px) scaleX(0.9000);">-</div>
<div class="t" id="t181" style="position:absolute;top:508.83px;font-size:10px;line-height:10px;color:#e8e8e8;white-space:nowrap;-webkit-text-stroke:0.22px currentColor;left:879.00px;transform-origin:0 0;transform:translateX(-3.01px) scaleX(0.9000);">-</div>
<div class="t" id="t182" style="position:absolute;top:524.76px;font-size:9.5px;line-height:9.5px;color:#eef0f2;white-space:nowrap;font-weight:bold;left:541.30px;transform-origin:0 0;transform:translateX(0.00px) scaleX(0.7800);">Standard deviation:</div>
<div class="t" id="t183" style="position:absolute;top:524.33px;font-size:10px;line-height:10px;color:#e8e8e8;white-space:nowrap;-webkit-text-stroke:0.22px currentColor;left:704.00px;transform-origin:0 0;transform:translateX(-3.01px) scaleX(0.9000);">-</div>
<div class="t" id="t184" style="position:absolute;top:524.33px;font-size:10px;line-height:10px;color:#e8e8e8;white-space:nowrap;-webkit-text-stroke:0.22px currentColor;left:879.00px;transform-origin:0 0;transform:translateX(-3.01px) scaleX(0.9000);">-</div>
<div class="t" id="t185" style="position:absolute;top:541.96px;font-size:9.5px;line-height:9.5px;color:#eef0f2;white-space:nowrap;font-weight:bold;left:541.30px;transform-origin:0 0;transform:translateX(0.00px) scaleX(0.7800);">Mode:</div>
<div class="t" id="t186" style="position:absolute;top:541.53px;font-size:10px;line-height:10px;color:#e8e8e8;white-space:nowrap;-webkit-text-stroke:0.22px currentColor;left:704.00px;transform-origin:0 0;transform:translateX(-3.01px) scaleX(0.9000);">-</div>
<div class="t" id="t187" style="position:absolute;top:541.53px;font-size:10px;line-height:10px;color:#e8e8e8;white-space:nowrap;-webkit-text-stroke:0.22px currentColor;left:879.00px;transform-origin:0 0;transform:translateX(-3.01px) scaleX(0.9000);">-</div>
<div class="t" id="t188" style="position:absolute;top:414.04px;font-size:10px;line-height:10px;color:#e8e8e8;white-space:nowrap;-webkit-text-stroke:0.22px currentColor;left:1404.00px;transform-origin:0 0;transform:translateX(-10.01px) scaleX(0.9000);">39</div>
<div class="t" id="t189" style="position:absolute;top:430.14px;font-size:10px;line-height:10px;color:#e8e8e8;white-space:nowrap;-webkit-text-stroke:0.22px currentColor;left:1404.00px;transform-origin:0 0;transform:translateX(-3.01px) scaleX(0.9000);">-</div>
<div class="t" id="t190" style="position:absolute;top:445.74px;font-size:10px;line-height:10px;color:#e8e8e8;white-space:nowrap;-webkit-text-stroke:0.22px currentColor;left:1404.00px;transform-origin:0 0;transform:translateX(-22.53px) scaleX(0.9000);">462.7</div>
<div class="t" id="t191" style="position:absolute;top:461.74px;font-size:10px;line-height:10px;color:#e8e8e8;white-space:nowrap;-webkit-text-stroke:0.22px currentColor;left:1404.00px;transform-origin:0 0;transform:translateX(-5.01px) scaleX(0.9000);">0</div>
<div class="t" id="t192" style="position:absolute;top:477.34px;font-size:10px;line-height:10px;color:#e8e8e8;white-space:nowrap;-webkit-text-stroke:0.22px currentColor;left:1404.00px;transform-origin:0 0;transform:translateX(-25.03px) scaleX(0.9000);">94400</div>
<div class="t" id="t193" style="position:absolute;top:492.94px;font-size:10px;line-height:10px;color:#e8e8e8;white-space:nowrap;-webkit-text-stroke:0.22px currentColor;left:1404.00px;transform-origin:0 0;transform:translateX(-25.03px) scaleX(0.9000);">10256</div>
<div class="t" id="t194" style="position:absolute;top:508.83px;font-size:10px;line-height:10px;color:#e8e8e8;white-space:nowrap;-webkit-text-stroke:0.22px currentColor;left:1404.00px;transform-origin:0 0;transform:translateX(-5.01px) scaleX(0.9000);">0</div>
<div class="t" id="t195" style="position:absolute;top:524.33px;font-size:10px;line-height:10px;color:#e8e8e8;white-space:nowrap;-webkit-text-stroke:0.22px currentColor;left:1404.00px;transform-origin:0 0;transform:translateX(-68.00px) scaleX(0.7888);">2161334.45031545</div>
<div class="t" id="t196" style="position:absolute;top:541.53px;font-size:10px;line-height:10px;color:#e8e8e8;white-space:nowrap;-webkit-text-stroke:0.22px currentColor;left:1404.00px;transform-origin:0 0;transform:translateX(-5.01px) scaleX(0.9000);">0</div>
<div class="t" id="t197" style="position:absolute;top:524.33px;font-size:10px;line-height:10px;color:#e8e8e8;white-space:nowrap;-webkit-text-stroke:0.22px currentColor;left:1228.00px;transform-origin:0 0;transform:translateX(-73.00px) scaleX(0.7955);">638.6852719176159</div>
<div class="t" id="t198" style="position:absolute;top:541.53px;font-size:10px;line-height:10px;color:#e8e8e8;white-space:nowrap;-webkit-text-stroke:0.22px currentColor;left:879.00px;transform-origin:0 0;transform:translateX(-100.73px) scaleX(0.9000);">Turbot/Greenland Halibut</div>
<div class="t" id="t199" style="position:absolute;top:541.53px;font-size:10px;line-height:10px;color:#e8e8e8;white-space:nowrap;-webkit-text-stroke:0.22px currentColor;left:1053.00px;transform-origin:0 0;transform:translateX(-99.03px) scaleX(0.9000);">Bottom otter trawl (stern)</div>
<div class="a" style="left:1409px;top:391px;width:11px;height:155px;background:#f0f0f0"></div>
<div class="a" style="left:1409px;top:391px;width:11px;height:22px;background:#d5d8dc"></div>
<div class="a" style="left:1410.5px;top:424px;width:8px;height:102px;background:#c1c1c1"></div>
<svg class="a" style="left:1409px;top:414px" width="11" height="10"><path d="M2.5 7 L5.5 3.5 L8.5 7 Z" fill="#555"/></svg>
<svg class="a" style="left:1409px;top:535px" width="11" height="10"><path d="M2.5 3 L5.5 6.5 L8.5 3 Z" fill="#555"/></svg>
<div class="a" style="left:529px;top:546px;width:901px;height:3px;background:#1f262e"></div>
<div class="a" style="left:1426px;top:360px;width:4px;height:189px;background:#7d8590"></div>
<div class="a" style="left:922px;top:259px;width:460px;height:268px;background:#3b5064;border:1.5px solid #c0c6cc;border-top:1px solid #8a98a8;border-radius:0 0 3px 3px;box-shadow:-4px 5px 16px rgba(0,0,0,0.35)"></div>
<div class="a" style="left:923.5px;top:260px;width:457px;height:20.5px;background:#3d5266"></div>
<div class="a" style="left:923.5px;top:280.5px;width:457px;height:2px;background:#c3c9cf"></div>
<div class="a" style="left:923.5px;top:282.5px;width:457px;height:28.5px;background:#22344d"></div>
<div class="a" style="left:923.5px;top:311px;width:457px;height:1.5px;background:#2c3c50"></div>
<div class="a" style="left:923.5px;top:310.5px;width:112px;height:2.5px;background:#47b3e6"></div>
<div class="t" id="t200" style="position:absolute;top:261.96px;font-size:16px;line-height:16px;color:#f2f2f2;white-space:nowrap;font-weight:bold;left:925.80px;transform-origin:0 0;transform:translateX(0.00px) scaleX(0.7676);">Graphs</div>
<div class="t" id="t201" style="position:absolute;top:290.77px;font-size:11.5px;line-height:11.5px;color:#4db6ea;white-space:nowrap;-webkit-text-stroke:0.22px currentColor;left:978.70px;transform-origin:0 0;transform:translateX(-40.50px) scaleX(0.9341);">Species - Weight</div>
<div class="t" id="t202" style="position:absolute;top:291.54px;font-size:10px;line-height:10px;color:#f0f0f0;white-space:nowrap;font-weight:bold;left:1087.00px;transform-origin:0 0;transform:translateX(-30.00px) scaleX(0.8239);">Species - Value</div>
<div class="t" id="t203" style="position:absolute;top:291.54px;font-size:10px;line-height:10px;color:#f0f0f0;white-space:nowrap;font-weight:bold;left:1192.50px;transform-origin:0 0;transform:translateX(-38.00px) scaleX(0.8425);">Gear Type - Weight</div>
<div class="t" id="t204" style="position:absolute;top:291.54px;font-size:10px;line-height:10px;color:#f0f0f0;white-space:nowrap;font-weight:bold;left:1297.00px;transform-origin:0 0;transform:translateX(-35.00px) scaleX(0.8415);">Gear Type - Value</div>
<div class="t" id="t205" style="position:absolute;top:319.69px;font-size:11px;line-height:11px;color:#dfe4ea;white-space:nowrap;font-weight:bold;left:1152.00px;transform-origin:0 0;transform:translateX(-129.00px) scaleX(0.8691);">Domestic Commercial Fish Landings: Species by Weight</div>
<div class="a" style="left:1372.5px;top:246.5px;width:19px;height:19px;border-radius:50%;background:#22344d;border:2px solid #d0d4d8"></div>
<svg class="a" style="left:1376px;top:250px" width="12" height="12"><path d="M3 3 L9 9 M9 3 L3 9" stroke="#fff" stroke-width="1.5"/></svg>
<svg class="a" style="left:980px;top:330px" width="170" height="165" viewBox="980 330 170 165">
<circle cx="1064.6" cy="411.1" r="72.5" fill="#40bdd0"/>
<path d="M1064.6,411.1 L1061.31,483.53 A72.5,72.5 0 0 1 995.31,432.42 Z" fill="#c83232"/>
<path d="M1064.6,411.1 L995.31,432.42 A72.5,72.5 0 0 1 992.36,417.29 Z" fill="#2b7595"/>
<path d="M1064.6,411.1 L992.36,417.29 A72.5,72.5 0 0 1 992.11,410.09 Z" fill="#c9dc48"/>
</svg>
<div class="a" style="left:1089.8px;top:385.6px;width:0;height:0"><div style="position:absolute;transform:rotate(-56deg);transform-origin:0 0"><div style="position:absolute;left:-14px;top:-6px;width:28px;text-align:center;font-size:9px;line-height:12px;font-weight:bold;color:#f4f4f4;white-space:nowrap">75.8%</div></div></div>
<div class="a" style="left:1042.3px;top:439.7px;width:0;height:0"><div style="position:absolute;transform:rotate(-56deg);transform-origin:0 0"><div style="position:absolute;left:-14px;top:-6px;width:28px;text-align:center;font-size:9px;line-height:12px;font-weight:bold;color:#f4f4f4;white-space:nowrap">19.4%</div></div></div>
<div class="a" style="left:1203.4px;top:334.4px;width:7.2px;height:7.2px;background:#3cc0d6"></div>
<div class="t" id="t206" style="position:absolute;top:334.18px;font-size:9px;line-height:9px;color:#e9ecef;white-space:nowrap;font-weight:bold;left:1213.00px;transform-origin:0 0;transform:translateX(0.00px) scaleX(0.8000);">Turbot/Greenland Halibut</div>
<div class="a" style="left:1203.4px;top:349.0px;width:7.2px;height:7.2px;background:#d83434"></div>
<div class="t" id="t207" style="position:absolute;top:348.78px;font-size:9px;line-height:9px;color:#e9ecef;white-space:nowrap;font-weight:bold;left:1213.00px;transform-origin:0 0;transform:translateX(0.00px) scaleX(0.8000);">Shrimp, Pandalus Borealis</div>
<div class="a" style="left:1203.4px;top:363.2px;width:7.2px;height:7.2px;background:#2f7aa0"></div>
<div class="t" id="t208" style="position:absolute;top:362.98px;font-size:9px;line-height:9px;color:#e9ecef;white-space:nowrap;font-weight:bold;left:1213.00px;transform-origin:0 0;transform:translateX(0.00px) scaleX(0.8000);">Crab, Queen/Snow</div>
<div class="a" style="left:1203.4px;top:377.4px;width:7.2px;height:7.2px;background:#c4d848"></div>
<div class="t" id="t209" style="position:absolute;top:377.18px;font-size:9px;line-height:9px;color:#e9ecef;white-space:nowrap;font-weight:bold;left:1213.00px;transform-origin:0 0;transform:translateX(0.00px) scaleX(0.8000);">Redfish</div>
<div class="a" style="left:1203.4px;top:392.0px;width:7.2px;height:7.2px;background:#9a3fd6"></div>
<div class="t" id="t210" style="position:absolute;top:391.78px;font-size:9px;line-height:9px;color:#e9ecef;white-space:nowrap;font-weight:bold;left:1213.00px;transform-origin:0 0;transform:translateX(0.00px) scaleX(0.8000);">American Plaice</div>
<div class="a" style="left:1203.4px;top:405.9px;width:7.2px;height:7.2px;background:#3db59a"></div>
<div class="t" id="t211" style="position:absolute;top:405.68px;font-size:9px;line-height:9px;color:#e9ecef;white-space:nowrap;font-weight:bold;left:1213.00px;transform-origin:0 0;transform:translateX(0.00px) scaleX(0.8000);">Capelin</div>
<div class="a" style="left:1203.4px;top:420.4px;width:7.2px;height:7.2px;background:#d9b23c"></div>
<div class="t" id="t212" style="position:absolute;top:420.18px;font-size:9px;line-height:9px;color:#e9ecef;white-space:nowrap;font-weight:bold;left:1213.00px;transform-origin:0 0;transform:translateX(0.00px) scaleX(0.8000);">Cod, Atlantic</div>
<div class="a" style="left:1203.4px;top:434.7px;width:7.2px;height:7.2px;background:#7ec73e"></div>
<div class="t" id="t213" style="position:absolute;top:434.48px;font-size:9px;line-height:9px;color:#e9ecef;white-space:nowrap;font-weight:bold;left:1213.00px;transform-origin:0 0;transform:translateX(0.00px) scaleX(0.8000);">Grenadier, Rough-Head</div>
<div class="a" style="left:1203.4px;top:449.0px;width:7.2px;height:7.2px;background:#cda862"></div>
<div class="t" id="t214" style="position:absolute;top:448.78px;font-size:9px;line-height:9px;color:#e9ecef;white-space:nowrap;font-weight:bold;left:1213.00px;transform-origin:0 0;transform:translateX(0.00px) scaleX(0.8000);">Greysole/Witch</div>
<div class="a" style="left:1203.4px;top:463.2px;width:7.2px;height:7.2px;background:#c84c6c"></div>
<div class="t" id="t215" style="position:absolute;top:462.98px;font-size:9px;line-height:9px;color:#e9ecef;white-space:nowrap;font-weight:bold;left:1213.00px;transform-origin:0 0;transform:translateX(0.00px) scaleX(0.8000);">Halibut – Atlantic</div>
<div class="a" style="left:1203.4px;top:477.4px;width:7.2px;height:7.2px;background:#7c5ad2"></div>
<div class="t" id="t216" style="position:absolute;top:477.18px;font-size:9px;line-height:9px;color:#e9ecef;white-space:nowrap;font-weight:bold;left:1213.00px;transform-origin:0 0;transform:translateX(0.00px) scaleX(0.8000);">Heads, Groundfish</div>
<div class="a" style="left:1308px;top:334.4px;width:7.2px;height:7.2px;background:#d06a2c"></div>
<div class="t" id="t217" style="position:absolute;top:334.18px;font-size:9px;line-height:9px;color:#e9ecef;white-space:nowrap;font-weight:bold;left:1317.60px;transform-origin:0 0;transform:translateX(0.00px) scaleX(0.8000);">Herring, Atlantic</div>
<div class="a" style="left:1308px;top:349.0px;width:7.2px;height:7.2px;background:#c25ab2"></div>
<div class="t" id="t218" style="position:absolute;top:348.78px;font-size:9px;line-height:9px;color:#e9ecef;white-space:nowrap;font-weight:bold;left:1317.60px;transform-origin:0 0;transform:translateX(0.00px) scaleX(0.8000);">Skate</div>
<div class="a" style="left:1308px;top:363.2px;width:7.2px;height:7.2px;background:#3fc882"></div>
<div class="t" id="t219" style="position:absolute;top:362.98px;font-size:9px;line-height:9px;color:#e9ecef;white-space:nowrap;font-weight:bold;left:1317.60px;transform-origin:0 0;transform:translateX(0.00px) scaleX(0.8000);">Argentine</div>
<div class="a" style="left:1308px;top:377.4px;width:7.2px;height:7.2px;background:#4a36d6"></div>
<div class="t" id="t220" style="position:absolute;top:377.18px;font-size:9px;line-height:9px;color:#e9ecef;white-space:nowrap;font-weight:bold;left:1317.60px;transform-origin:0 0;transform:translateX(0.00px) scaleX(0.8000);">Mackerel</div>
</body></html>
